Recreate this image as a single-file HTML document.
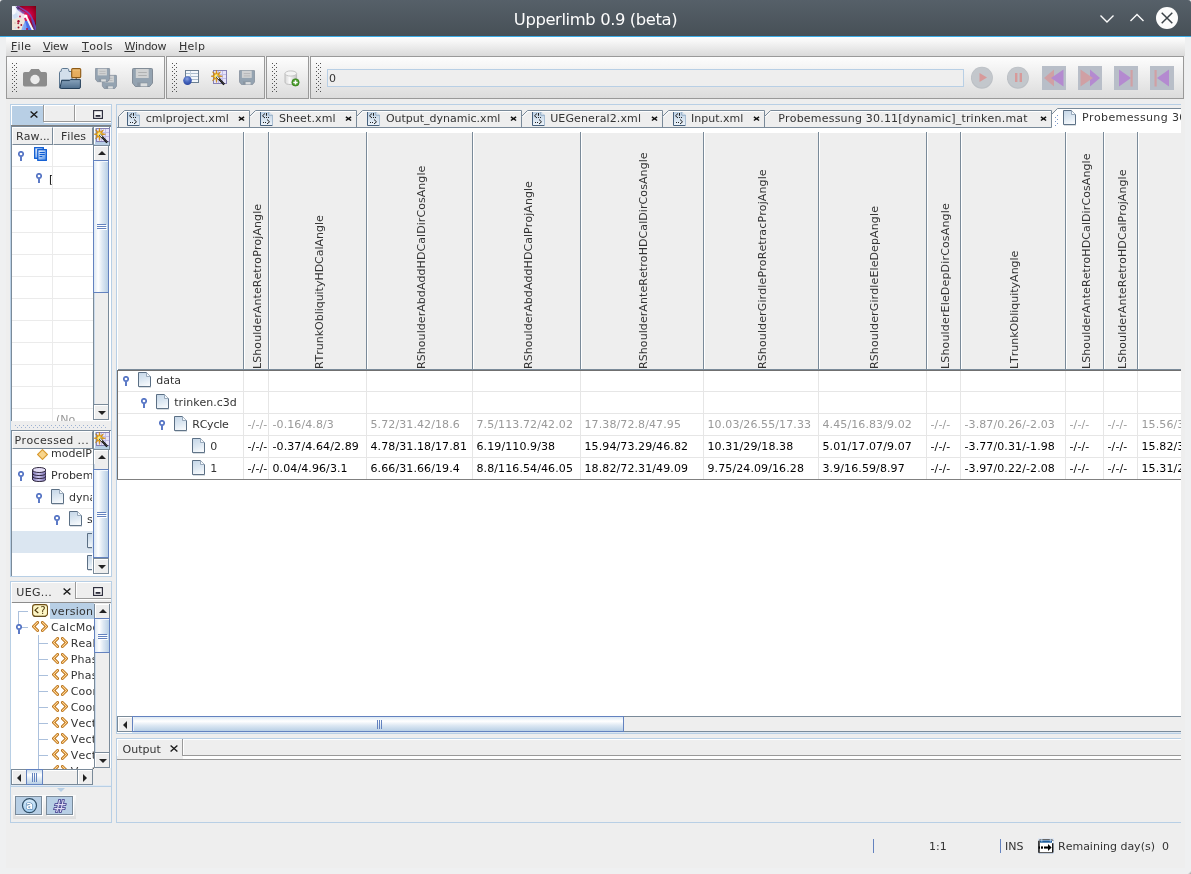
<!DOCTYPE html>
<html><head><meta charset="utf-8"><title>Upperlimb 0.9 (beta)</title>
<style>
html,body{margin:0;padding:0}
body{width:1191px;height:874px;overflow:hidden;background:#eff0f1;position:relative;font-family:"DejaVu Sans","Liberation Sans",sans-serif;font-size:11px;color:#333;font-kerning:none;font-variant-ligatures:none}
.a{position:absolute;box-sizing:border-box}
.t{white-space:nowrap}
u{text-decoration:underline;text-underline-offset:1px}
.clip{overflow:hidden}
</style></head>
<body>
<div id="root" class="a" style="left:0;top:0;width:1191px;height:874px;will-change:transform;">
<div class="a " style="left:0px;top:0px;width:1191px;height:36px;background:linear-gradient(#566069,#475057);border-radius:3px 3px 0 0;"></div>
<div class="a " style="left:0px;top:36px;width:1191px;height:1px;background:#3daee9;"></div>
<svg class="a" style="left:12px;top:6px;" width="24" height="24" viewBox="0 0 24 24" preserveAspectRatio="none"><defs><radialGradient id="g1" gradientUnits="userSpaceOnUse" cx="14.5" cy="9.5" r="15"><stop offset="0" stop-color="#f01c64"/><stop offset=".35" stop-color="#c6003e"/><stop offset=".75" stop-color="#8c001a"/><stop offset="1" stop-color="#5c0008"/></radialGradient><filter id="g2" x="-20%" y="-20%" width="140%" height="140%"><feGaussianBlur stdDeviation="0.6"/></filter><clipPath id="g3"><rect width="24" height="24"/></clipPath></defs><g clip-path="url(#g3)"><rect width="24" height="24" fill="url(#g1)"/><g filter="url(#g2)"><path d="M-1 -1 H4 L7.5 4 L10.5 7 L13 10.5 L13 15 L13.5 19 L15 25 H-1Z" fill="#e2eaf7"/><path d="M-1 14 L4 12.5 L8 11.5 L12.5 13 L13.5 18 L15 25 H-1Z" fill="#efe6d8"/><path d="M0 1 L3 0 L4.5 5 L2 9 L0 8Z" fill="#f6faff"/><path d="M1 9 L5 7 L6 11 L2 13Z" fill="#cfe0f6"/><path d="M7 5 L12.5 8 L13.2 12.5 L10 13.5 L7.5 10Z" fill="#f4dfe8"/><path d="M4.5 -1 C7.5 2 13 3.5 17 7.5 C20.5 11 22 17 24.5 25" fill="none" stroke="#6e54c4" stroke-width="1.6" opacity=".85"/><path d="M3.5 0 C6 2.5 10 4 13.5 6.8 L11 8 L6 4.5Z" fill="#6f62c6" opacity=".7"/><path d="M3.5 0.5 L8 2 L6 4Z" fill="#3b2668" opacity=".85"/><path d="M19 13 L22 14 L25 25 L22 25Z" fill="#5a48b8" opacity=".75"/><path d="M13 14 L16.5 15 L22 25 H11.5Z" fill="#4c70e8"/><path d="M11 19 L13.5 16 L15.5 25 H9Z" fill="#7eaaf8" opacity=".9"/><path d="M12 12.3 L14.5 11.5 L16.6 15 L13 14.8Z" fill="#d81858"/><path d="M14 10 L21.3 25" stroke="#fff" stroke-width="1.9" opacity=".95"/><circle cx="13.7" cy="10.1" r="1.7" fill="#fff"/><circle cx="8" cy="10.5" r=".9" fill="#c82050"/><circle cx="6.5" cy="15.3" r="1.2" fill="#a81030"/><circle cx="6.2" cy="17.2" r="1" fill="#b02040"/><circle cx="9.3" cy="19" r=".9" fill="#a81030"/><circle cx="6.5" cy="21.5" r="1" fill="#981028"/><circle cx="15" cy="23" r="1" fill="#b01040"/><circle cx="3" cy="17" r=".8" fill="#d4c0b0"/><circle cx="3.5" cy="22" r=".9" fill="#c8dcf4"/></g></g></svg>
<div class="a t" style="left:0;top:9px;width:1191px;text-align:center;color:#fcfcfc;font-size:16.4px;line-height:22px;letter-spacing:-0.4px;">Upperlimb 0.9 (beta)</div>
<svg class="a" style="left:1098px;top:10px;" width="18" height="18" viewBox="0 0 18 18"><path d="M2.5 5.5 L9 12 L15.5 5.5" fill="none" stroke="#fcfcfc" stroke-width="1.4"/></svg>
<svg class="a" style="left:1128px;top:9px;" width="18" height="18" viewBox="0 0 18 18"><path d="M2.5 12 L9 5.5 L15.5 12" fill="none" stroke="#fcfcfc" stroke-width="1.4"/></svg>
<svg class="a" style="left:1156px;top:7px;" width="22" height="22" viewBox="0 0 22 22"><circle cx="11" cy="11" r="11" fill="#fcfcfc"/><path d="M5.7 5.7 L16.3 16.3 M16.3 5.7 L5.7 16.3" stroke="#3b4248" stroke-width="1.5" fill="none"/></svg>
<div class="a " style="left:6px;top:37px;width:1179px;height:831px;background:#eeeeee;"></div>
<div class="a " style="left:6px;top:37px;width:1179px;height:19px;background:linear-gradient(#ffffff,#dadada);"></div>
<div class="a t" style="left:10.9px;top:40px;font-size:11px;line-height:13px;letter-spacing:0.3px;"><u>F</u>ile</div>
<div class="a t" style="left:43px;top:40px;font-size:11px;line-height:13px;letter-spacing:-0.25px;"><u>V</u>iew</div>
<div class="a t" style="left:82px;top:40px;font-size:11px;line-height:13px;letter-spacing:0.4px;"><u>T</u>ools</div>
<div class="a t" style="left:124.4px;top:40px;font-size:11px;line-height:13px;letter-spacing:-0.3px;"><u>W</u>indow</div>
<div class="a t" style="left:178.9px;top:40px;font-size:11px;line-height:13px;letter-spacing:0.3px;"><u>H</u>elp</div>
<div class="a " style="left:6px;top:56px;width:159px;height:43px;background:linear-gradient(#fdfdfd,#dcdcdc);border:1px solid #999;"></div>
<svg class="a" style="left:12px;top:63px;" width="5" height="29" viewBox="0 0 5 29" preserveAspectRatio="none"><defs><pattern id="g4" width="4" height="4" patternUnits="userSpaceOnUse"><rect x="0" y="0" width="1" height="1" fill="#505050"/><rect x="2" y="2" width="1" height="1" fill="#505050"/></pattern></defs><rect width="5" height="29" fill="url(#g4)"/></svg>
<div class="a " style="left:166px;top:56px;width:99px;height:43px;background:linear-gradient(#fdfdfd,#dcdcdc);border:1px solid #999;"></div>
<svg class="a" style="left:172px;top:63px;" width="5" height="29" viewBox="0 0 5 29" preserveAspectRatio="none"><defs><pattern id="g5" width="4" height="4" patternUnits="userSpaceOnUse"><rect x="0" y="0" width="1" height="1" fill="#505050"/><rect x="2" y="2" width="1" height="1" fill="#505050"/></pattern></defs><rect width="5" height="29" fill="url(#g5)"/></svg>
<div class="a " style="left:266px;top:56px;width:43px;height:43px;background:linear-gradient(#fdfdfd,#dcdcdc);border:1px solid #999;"></div>
<svg class="a" style="left:272px;top:63px;" width="5" height="29" viewBox="0 0 5 29" preserveAspectRatio="none"><defs><pattern id="g6" width="4" height="4" patternUnits="userSpaceOnUse"><rect x="0" y="0" width="1" height="1" fill="#505050"/><rect x="2" y="2" width="1" height="1" fill="#505050"/></pattern></defs><rect width="5" height="29" fill="url(#g6)"/></svg>
<div class="a " style="left:310px;top:56px;width:874px;height:43px;background:linear-gradient(#fdfdfd,#dcdcdc);border:1px solid #999;"></div>
<svg class="a" style="left:316px;top:63px;" width="5" height="29" viewBox="0 0 5 29" preserveAspectRatio="none"><defs><pattern id="g7" width="4" height="4" patternUnits="userSpaceOnUse"><rect x="0" y="0" width="1" height="1" fill="#505050"/><rect x="2" y="2" width="1" height="1" fill="#505050"/></pattern></defs><rect width="5" height="29" fill="url(#g7)"/></svg>
<svg class="a" style="left:23px;top:68px;" width="24" height="19" viewBox="0 0 24 19" preserveAspectRatio="none"><path d="M1.8 4 H6 L8.2 0.9 H15.8 L18 4 H22.2 Q24 4 24 5.8 V16.8 Q24 18.6 22.2 18.6 H1.8 Q0 18.6 0 16.8 V5.8 Q0 4 1.8 4Z" fill="#8c8c8c"/><circle cx="12" cy="11.5" r="4.7" fill="#ececec"/></svg>
<svg class="a" style="left:59px;top:68px;" width="23" height="22" viewBox="0 0 23 22" preserveAspectRatio="none"><defs><linearGradient id="g8" x1="0" y1="0" x2="0" y2="1"><stop offset="0" stop-color="#8aa4bd"/><stop offset="1" stop-color="#4f6f8e"/></linearGradient><linearGradient id="g9" x1="0" y1="0" x2="0" y2="1"><stop offset="0" stop-color="#f6cf8e"/><stop offset=".3" stop-color="#e8b060"/><stop offset="1" stop-color="#e3a85a"/></linearGradient></defs><path d="M0.5 20 V4.5 Q0.5 3.5 1.5 3.5 H2 L2.5 1.2 Q2.7 0.5 3.5 0.5 H8.5 Q9.3 0.5 9.5 1.2 L10 3.5 H13 V12 H2.5 V20Z" fill="#d3dfeb" stroke="#5d7790" stroke-width="1"/><rect x="12.7" y="0.6" width="9" height="9" rx="1" fill="url(#g9)" stroke="#8e5a14" stroke-width="1.1"/><path d="M17.2 9.8 V12" stroke="#5a4a30" stroke-width="1"/><path d="M2.6 12.6 H10.6 L11.6 11.6 H21.4 V19 Q21.4 20.5 20 20.5 H2.2 Q1 20.5 1.2 19 Z" fill="url(#g8)" stroke="#243f5a" stroke-width="1"/></svg>
<svg class="a" style="left:95px;top:68px;" width="22" height="21" viewBox="0 0 22 21" preserveAspectRatio="none"><g transform="translate(7,7) scale(0.68,0.74)"><path d="M0.5 1.5 Q0.5 0.5 1.5 0.5 H20.5 Q21.5 0.5 21.5 1.5 V15 L18.5 18.5 H3.5 L0.5 15Z" fill="#94a3b1" stroke="#808a96" stroke-width="1"/><rect x="4" y="1" width="13.5" height="9" fill="#d0d2d3"/><path d="M6.5 4.5 H15.5 M6.5 7.5 H15.5" stroke="#aeb0b1" stroke-width="1"/><rect x="5.5" y="14.5" width="11" height="4" fill="#8a96a2"/><rect x="9" y="15.3" width="7" height="3" fill="#dcdedf"/></g><g transform="scale(0.68,0.74)"><path d="M0.5 1.5 Q0.5 0.5 1.5 0.5 H20.5 Q21.5 0.5 21.5 1.5 V15 L18.5 18.5 H3.5 L0.5 15Z" fill="#94a3b1" stroke="#808a96" stroke-width="1"/><rect x="4" y="1" width="13.5" height="9" fill="#d0d2d3"/><path d="M6.5 4.5 H15.5 M6.5 7.5 H15.5" stroke="#aeb0b1" stroke-width="1"/><rect x="5.5" y="14.5" width="11" height="4" fill="#8a96a2"/><rect x="9" y="15.3" width="7" height="3" fill="#dcdedf"/></g></svg>
<svg class="a" style="left:132px;top:68px;" width="21" height="19" viewBox="0 0 22 19" preserveAspectRatio="none"><path d="M0.5 1.5 Q0.5 0.5 1.5 0.5 H20.5 Q21.5 0.5 21.5 1.5 V15 L18.5 18.5 H3.5 L0.5 15Z" fill="#94a3b1" stroke="#808a96" stroke-width="1"/><rect x="4" y="1" width="13.5" height="9" fill="#d0d2d3"/><path d="M6.5 4.5 H15.5 M6.5 7.5 H15.5" stroke="#aeb0b1" stroke-width="1"/><rect x="5.5" y="14.5" width="11" height="4" fill="#8a96a2"/><rect x="9" y="15.3" width="7" height="3" fill="#dcdedf"/></svg>
<svg class="a" style="left:183px;top:70px;" width="16" height="16" viewBox="0 0 16 16" preserveAspectRatio="none"><defs><radialGradient id="g10" cx=".45" cy=".3" r=".7"><stop offset="0" stop-color="#8aa2e0"/><stop offset=".5" stop-color="#4868c0"/><stop offset="1" stop-color="#2a46a0"/></radialGradient></defs><rect x="2.5" y="0.5" width="13" height="12" fill="#f2f7fb" stroke="#6b7f92" stroke-width="1"/><path d="M3 3.5 H15 M3 6.5 H15 M3 9.5 H15" stroke="#a9bccd" stroke-width="1"/><path d="M7.5 1 V12" stroke="#c4d2df" stroke-width="1"/><circle cx="4.5" cy="10.6" r="4.3" fill="url(#g10)"/></svg>
<svg class="a" style="left:211px;top:70px;" width="16" height="16" viewBox="0 0 16 16" preserveAspectRatio="none"><rect x="2.5" y="0.5" width="13" height="13" fill="#e6e3fa" stroke="#8581b4" stroke-width="1"/><path d="M3 4.5 H15 M3 8.5 H15 M11.5 1 V13 M7.5 1 V13" stroke="#c2bee6" stroke-width="1"/><path d="M5.5 0 L6.3 4 L9.5 1.8 L7.6 5.2 L11.5 6.2 L7.6 7.2 L9.5 10.8 L6.3 8.4 L5.5 12.5 L4.7 8.4 L1.5 10.8 L3.4 7.2 L0 6.2 L3.4 5.2 L1.5 1.8 L4.7 4Z" fill="#e8a010" stroke="#c07c08" stroke-width=".5"/><circle cx="5.5" cy="6.2" r="2" fill="#fff27a"/><path d="M5.5 6.2 L13.2 14.4" stroke="#111" stroke-width="2.2"/><path d="M5.5 6.2 L8 8.8" stroke="#fff" stroke-width="1.2"/><path d="M8.6 9.5 L13 14.2" stroke="#888" stroke-width=".8" stroke-dasharray=".8 .8"/></svg>
<svg class="a" style="left:239px;top:70px;" width="16" height="15" viewBox="0 0 22 19" preserveAspectRatio="none"><path d="M0.5 1.5 Q0.5 0.5 1.5 0.5 H20.5 Q21.5 0.5 21.5 1.5 V15 L18.5 18.5 H3.5 L0.5 15Z" fill="#94a3b1" stroke="#808a96" stroke-width="1"/><rect x="4" y="1" width="13.5" height="9" fill="#d0d2d3"/><path d="M6.5 4.5 H15.5 M6.5 7.5 H15.5" stroke="#aeb0b1" stroke-width="1"/><rect x="5.5" y="14.5" width="11" height="4" fill="#8a96a2"/><rect x="9" y="15.3" width="7" height="3" fill="#dcdedf"/></svg>
<svg class="a" style="left:284px;top:70px;" width="16" height="17" viewBox="0 0 16 17" preserveAspectRatio="none"><defs><linearGradient id="g11" x1="0" y1="0" x2="1" y2="0"><stop offset="0" stop-color="#d8d8d8"/><stop offset=".4" stop-color="#fafafa"/><stop offset="1" stop-color="#c4c4c4"/></linearGradient></defs><path d="M1 3.5 V12 Q1 14.5 6.8 14.5 Q12.6 14.5 12.6 12 V3.5Z" fill="url(#g11)" stroke="#bdbdbd" stroke-width="1"/><ellipse cx="6.8" cy="3.5" rx="5.8" ry="2.6" fill="#f4f4f4" stroke="#c4c4c4" stroke-width="1"/><circle cx="11.5" cy="12.4" r="3.7" fill="#4a9a2a" stroke="#2e7a16" stroke-width=".6"/><path d="M11.5 10.2 V14.6 M9.3 12.4 H13.7" stroke="#fff" stroke-width="1.5"/></svg>
<div class="a " style="left:327px;top:69px;width:637px;height:18px;background:#eeeeee;border:1px solid #b8cfe5;"></div>
<div class="a t" style="left:329px;top:72px;font-size:11px;line-height:13px;">0</div>
<svg class="a" style="left:971px;top:66px;" width="24" height="24" viewBox="0 0 24 24" preserveAspectRatio="none"><circle cx="10.9" cy="11.8" r="11" fill="#bcc0c5"/><circle cx="10.9" cy="11.4" r="10.2" fill="#c3c7cc"/><path d="M8.5 7 L16 11.5 L8.5 16Z" fill="#d79a9a"/></svg>
<svg class="a" style="left:1007px;top:66px;" width="24" height="24" viewBox="0 0 24 24" preserveAspectRatio="none"><circle cx="10.9" cy="11.8" r="11" fill="#bcc0c5"/><circle cx="10.9" cy="11.4" r="10.2" fill="#c3c7cc"/><rect x="8" y="7" width="2.4" height="9" fill="#d79a9a"/><rect x="12.6" y="7" width="2.4" height="9" fill="#d79a9a"/></svg>
<svg class="a" style="left:1042px;top:66px;" width="24" height="24" viewBox="0 0 24 24" preserveAspectRatio="none"><rect width="24" height="24" fill="#b8bec8"/><path d="M12 3.5 V20.5 L2 12Z" fill="#d0a0a4"/><path d="M21.5 3.5 V20.5 L9 12Z" fill="#b48ad0"/></svg>
<svg class="a" style="left:1078px;top:66px;" width="24" height="24" viewBox="0 0 24 24" preserveAspectRatio="none"><rect width="24" height="24" fill="#b8bec8"/><path d="M12 3.5 V20.5 L22 12Z" fill="#b48ad0"/><path d="M2.5 3.5 V20.5 L15 12Z" fill="#d0a0a4"/></svg>
<svg class="a" style="left:1114px;top:66px;" width="24" height="24" viewBox="0 0 24 24" preserveAspectRatio="none"><rect width="24" height="24" fill="#b8bec8"/><path d="M5 3.5 V20.5 L17 12Z" fill="#b48ad0"/><rect x="16.5" y="4" width="2.2" height="16.5" fill="#d0a0a4"/></svg>
<svg class="a" style="left:1150px;top:66px;" width="24" height="24" viewBox="0 0 24 24" preserveAspectRatio="none"><rect width="24" height="24" fill="#b8bec8"/><path d="M19 3.5 V20.5 L7 12Z" fill="#b48ad0"/><rect x="4.5" y="4" width="2.2" height="16.5" fill="#d0a0a4"/></svg>
<div class="a " style="left:10px;top:104px;width:102px;height:473px;border:1px solid #b8cfe5;"></div>
<div class="a " style="left:11px;top:105px;width:100px;height:21px;background:#b8cfe5;"></div>
<div class="a " style="left:11px;top:105px;width:100px;height:1px;background:#fff;"></div>
<div class="a " style="left:11px;top:105px;width:1px;height:20px;background:#fff;"></div>
<div class="a " style="left:43px;top:106px;width:68px;height:16px;background:#eeeeee;"></div>
<div class="a " style="left:43px;top:105px;width:68px;height:1px;background:#fff;"></div>
<div class="a " style="left:43px;top:105px;width:1px;height:17px;background:#999;"></div>
<div class="a " style="left:74px;top:105px;width:1px;height:17px;background:#999;"></div>
<div class="a " style="left:43px;top:121px;width:68px;height:1px;background:#999;"></div>
<div class="a " style="left:44px;top:122px;width:67px;height:1px;background:#fff;"></div>
<div class="a " style="left:44px;top:106px;width:1px;height:15px;background:#fff;"></div>
<div class="a " style="left:75px;top:106px;width:1px;height:15px;background:#fff;"></div>
<svg class="a" style="left:30px;top:111px;" width="8" height="7" viewBox="0 0 8 7" preserveAspectRatio="none"><path d="M0.6 0.5 L7.4 6.5 M7.4 0.5 L0.6 6.5" stroke="#1a1a1a" stroke-width="1.35" fill="none"/></svg>
<svg class="a" style="left:93px;top:110px;" width="10" height="9" viewBox="0 0 10 9" preserveAspectRatio="none"><rect x="0.6" y="0.6" width="8.8" height="7.8" fill="#f6f6f6" stroke="#2b2b3a" stroke-width="1.15"/><rect x="2.6" y="5" width="4.8" height="1.8" fill="#2b2b3a"/></svg>
<div class="a " style="left:11px;top:125px;width:100px;height:1px;background:#808080;"></div>
<div class="a clip" style="left:11px;top:126px;width:100px;height:295px;background:#fff;border-left:1px solid #7a8a99;border-top:1px solid #7a8a99;"></div>
<div class="a " style="left:12px;top:127px;width:41px;height:18px;background:#eeeeee;border-right:1px solid #7a8a99;border-bottom:1px solid #7a8a99;border-top:1px solid #fff;border-left:1px solid #fff;"></div>
<div class="a " style="left:53px;top:127px;width:40px;height:18px;background:#eeeeee;border-right:1px solid #7a8a99;border-bottom:1px solid #7a8a99;border-top:1px solid #fff;border-left:1px solid #fff;"></div>
<div class="a t" style="left:16px;top:130px;font-size:11px;line-height:13px;">Raw...</div>
<div class="a t" style="left:61px;top:130px;font-size:11px;line-height:13px;">Files</div>
<div class="a " style="left:93px;top:126px;width:17px;height:20px;background:#b8cfe5;border:1px solid #7a8a99;"></div>
<div class="a " style="left:94px;top:127px;width:15px;height:1px;background:#fff;"></div>
<div class="a " style="left:94px;top:127px;width:1px;height:17px;background:#fff;"></div>
<svg class="a" style="left:94px;top:128px;" width="16" height="16" viewBox="0 0 16 16" preserveAspectRatio="none"><rect x="2.5" y="0.5" width="13" height="13" fill="#e6e3fa" stroke="#8581b4" stroke-width="1"/><path d="M3 4.5 H15 M3 8.5 H15 M11.5 1 V13 M7.5 1 V13" stroke="#c2bee6" stroke-width="1"/><path d="M5.5 0 L6.3 4 L9.5 1.8 L7.6 5.2 L11.5 6.2 L7.6 7.2 L9.5 10.8 L6.3 8.4 L5.5 12.5 L4.7 8.4 L1.5 10.8 L3.4 7.2 L0 6.2 L3.4 5.2 L1.5 1.8 L4.7 4Z" fill="#e8a010" stroke="#c07c08" stroke-width=".5"/><circle cx="5.5" cy="6.2" r="2" fill="#fff27a"/><path d="M5.5 6.2 L13.2 14.4" stroke="#111" stroke-width="2.2"/><path d="M5.5 6.2 L8 8.8" stroke="#fff" stroke-width="1.2"/><path d="M8.6 9.5 L13 14.2" stroke="#888" stroke-width=".8" stroke-dasharray=".8 .8"/></svg>
<div class="a " style="left:12px;top:166px;width:81px;height:1px;background:#ebebeb;"></div>
<div class="a " style="left:12px;top:188px;width:81px;height:1px;background:#ebebeb;"></div>
<div class="a " style="left:12px;top:210px;width:81px;height:1px;background:#ebebeb;"></div>
<div class="a " style="left:12px;top:232px;width:81px;height:1px;background:#ebebeb;"></div>
<div class="a " style="left:12px;top:254px;width:81px;height:1px;background:#ebebeb;"></div>
<div class="a " style="left:12px;top:276px;width:81px;height:1px;background:#ebebeb;"></div>
<div class="a " style="left:12px;top:298px;width:81px;height:1px;background:#ebebeb;"></div>
<div class="a " style="left:12px;top:320px;width:81px;height:1px;background:#ebebeb;"></div>
<div class="a " style="left:12px;top:342px;width:81px;height:1px;background:#ebebeb;"></div>
<div class="a " style="left:12px;top:364px;width:81px;height:1px;background:#ebebeb;"></div>
<div class="a " style="left:12px;top:386px;width:81px;height:1px;background:#ebebeb;"></div>
<div class="a " style="left:12px;top:408px;width:81px;height:1px;background:#ebebeb;"></div>
<div class="a " style="left:52px;top:145px;width:1px;height:276px;background:#ebebeb;"></div>
<svg class="a" style="left:18px;top:151px;" width="6" height="10" viewBox="0 0 6 10" preserveAspectRatio="none"><circle cx="3" cy="3" r="2.2" fill="#fff" stroke="#5574c4" stroke-width="1.7"/><path d="M3 5.4 V10" stroke="#5574c4" stroke-width="1.9"/></svg>
<svg class="a" style="left:34px;top:147px;" width="13" height="14" viewBox="0 0 13 14" preserveAspectRatio="none"><defs><linearGradient id="g12" x1="0" y1="0" x2="1" y2="1"><stop offset="0" stop-color="#ffffff"/><stop offset=".45" stop-color="#a8c8f4"/><stop offset="1" stop-color="#4a8ce4"/></linearGradient></defs><rect x="0.7" y="0.7" width="8.6" height="10.6" fill="url(#g12)" stroke="#0c5ad2" stroke-width="1.3"/><rect x="3.8" y="2.7" width="8.5" height="10.6" fill="url(#g12)" stroke="#0c5ad2" stroke-width="1.3"/><path d="M5.5 5.5 H10.8 M5.5 7.5 H10.8 M5.5 9.5 H8.3" stroke="#0c5ad2" stroke-width="1"/></svg>
<svg class="a" style="left:36px;top:173px;" width="6" height="10" viewBox="0 0 6 10" preserveAspectRatio="none"><circle cx="3" cy="3" r="2.2" fill="#fff" stroke="#5574c4" stroke-width="1.7"/><path d="M3 5.4 V10" stroke="#5574c4" stroke-width="1.9"/></svg>
<div class="a clip" style="left:12px;top:167px;width:40px;height:21px;"><div class="a t" style="left:37px;top:6px;font-size:11px;line-height:13px;color:#111;">[dynamic]</div></div>
<div class="a clip" style="left:53px;top:409px;width:40px;height:12px;"><div class="a t" style="left:3px;top:4px;font-size:11px;line-height:13px;color:#999;">(No</div></div>
<div class="a " style="left:93px;top:146px;width:16px;height:274px;background:#eeeeee;border-left:1px solid #7a8a99;border-right:1px solid #7a8a99;"></div>
<div class="a " style="left:94px;top:146px;width:1px;height:274px;background:#cbdaea;"></div>
<div class="a " style="left:109px;top:146px;width:1px;height:274px;background:#fff;"></div>
<div class="a " style="left:94px;top:146px;width:14px;height:14px;background:#eeeeee;border-left:1px solid #fff;border-top:1px solid #fff;"></div>
<svg class="a" style="left:98px;top:151px;" width="8" height="4" viewBox="0 0 8 4" preserveAspectRatio="none"><path d="M0 4 L4 0 L8 4Z" fill="#222"/></svg>
<div class="a " style="left:94px;top:404px;width:14px;height:16px;background:#eeeeee;border-top:1px solid #7a8a99;border-bottom:1px solid #7a8a99;"></div>
<div class="a " style="left:94px;top:405px;width:14px;height:1px;background:#fff;"></div>
<div class="a " style="left:94px;top:405px;width:1px;height:14px;background:#fff;"></div>
<svg class="a" style="left:98px;top:411px;" width="8" height="4" viewBox="0 0 8 4" preserveAspectRatio="none"><path d="M0 0 L4 4 L8 0Z" fill="#222"/></svg>
<div class="a " style="left:93px;top:160px;width:16px;height:133px;background:linear-gradient(90deg,#dde8f3,#ffffff 30%,#dde8f3 60%,#b8cfe5);border:1px solid #6382bf;"></div>
<div class="a " style="left:94px;top:161px;width:14px;height:1px;background:#f4f8fc;"></div>
<div class="a " style="left:97px;top:224px;width:9px;height:1px;background:#6382bf;"></div>
<div class="a " style="left:98px;top:225px;width:9px;height:1px;background:#fff;"></div>
<div class="a " style="left:97px;top:226px;width:9px;height:1px;background:#6382bf;"></div>
<div class="a " style="left:98px;top:227px;width:9px;height:1px;background:#fff;"></div>
<div class="a " style="left:97px;top:228px;width:9px;height:1px;background:#6382bf;"></div>
<div class="a " style="left:98px;top:229px;width:9px;height:1px;background:#fff;"></div>
<div class="a " style="left:11px;top:421px;width:100px;height:10px;background:#eeeeee;"></div>
<svg class="a" style="left:15px;top:425px" width="92" height="3"><defs><pattern id="spl" width="4" height="4" patternUnits="userSpaceOnUse"><rect x="0" y="0" width="1" height="1" fill="#9db1d2"/><rect x="2" y="2" width="1" height="1" fill="#9db1d2"/></pattern></defs><rect width="91" height="3" fill="url(#spl)"/></svg>
<div class="a clip" style="left:11px;top:430px;width:100px;height:146px;background:#fff;border-left:1px solid #7a8a99;border-top:1px solid #7a8a99;"></div>
<div class="a " style="left:12px;top:531px;width:81px;height:22px;background:#dbe6f1;"></div>
<div class="a " style="left:12px;top:464px;width:81px;height:1px;background:#ebebeb;"></div>
<div class="a " style="left:12px;top:486px;width:81px;height:1px;background:#ebebeb;"></div>
<div class="a " style="left:12px;top:508px;width:81px;height:1px;background:#ebebeb;"></div>
<svg class="a" style="left:37px;top:449px;" width="11" height="11" viewBox="0 0 11 11" preserveAspectRatio="none"><path d="M5.5 0.6 L10.4 5.5 L5.5 10.4 L0.6 5.5Z" fill="#f8d58c" stroke="#d89a30" stroke-width="1.1"/></svg>
<div class="a clip" style="left:12px;top:446px;width:80px;height:18px;"><div class="a t" style="left:39px;top:1px;font-size:11px;line-height:13px;">modelPar</div></div>
<svg class="a" style="left:18px;top:471px;" width="6" height="10" viewBox="0 0 6 10" preserveAspectRatio="none"><circle cx="3" cy="3" r="2.2" fill="#fff" stroke="#5574c4" stroke-width="1.7"/><path d="M3 5.4 V10" stroke="#5574c4" stroke-width="1.9"/></svg>
<svg class="a" style="left:31.5px;top:467px;" width="14.4" height="15" viewBox="0 0 15 15" preserveAspectRatio="none"><defs><linearGradient id="g13" x1="0" y1="0" x2="1" y2="0"><stop offset="0" stop-color="#8076b8"/><stop offset=".45" stop-color="#cdc6ee"/><stop offset="1" stop-color="#7a70b4"/></linearGradient></defs><path d="M0.5 3 V12 Q0.5 14.5 7.5 14.5 Q14.5 14.5 14.5 12 V3Z" fill="url(#g13)" stroke="#2a2238" stroke-width="1"/><ellipse cx="7.5" cy="3" rx="7" ry="2.5" fill="#e4def6" stroke="#2a2238" stroke-width="1"/><path d="M0.5 6 Q0.5 8.5 7.5 8.5 Q14.5 8.5 14.5 6 M0.5 9 Q0.5 11.5 7.5 11.5 Q14.5 11.5 14.5 9" fill="none" stroke="#2a2238" stroke-width="1"/></svg>
<div class="a clip" style="left:12px;top:465px;width:80px;height:21px;"><div class="a t" style="left:39px;top:4px;font-size:11px;line-height:13px;">Probemessung</div></div>
<svg class="a" style="left:36px;top:493px;" width="6" height="10" viewBox="0 0 6 10" preserveAspectRatio="none"><circle cx="3" cy="3" r="2.2" fill="#fff" stroke="#5574c4" stroke-width="1.7"/><path d="M3 5.4 V10" stroke="#5574c4" stroke-width="1.9"/></svg>
<svg class="a" style="left:51px;top:489px;" width="13" height="16" viewBox="0 0 13 16" preserveAspectRatio="none"><defs><linearGradient id="g14" x1="0.2" y1="0" x2="0.5" y2="1"><stop offset="0" stop-color="#c6d7e8"/><stop offset=".55" stop-color="#dde8f2"/><stop offset="1" stop-color="#f6f9fc"/></linearGradient></defs><path d="M0.5 0.5 H8.5 L12.5 4.5 V14.5 H0.5Z" fill="url(#g14)" stroke="#5b6f84" stroke-width="1"/><path d="M8.5 0.5 V4.5 H12.5" fill="#f4f8fc" stroke="#8ea2b6" stroke-width=".9"/><path d="M1 15.3 H13" stroke="#9aa6b2" stroke-width=".8" opacity=".6"/></svg>
<div class="a clip" style="left:12px;top:487px;width:80px;height:21px;"><div class="a t" style="left:57px;top:4px;font-size:11px;line-height:13px;">dynamic</div></div>
<svg class="a" style="left:54px;top:515px;" width="6" height="10" viewBox="0 0 6 10" preserveAspectRatio="none"><circle cx="3" cy="3" r="2.2" fill="#fff" stroke="#5574c4" stroke-width="1.7"/><path d="M3 5.4 V10" stroke="#5574c4" stroke-width="1.9"/></svg>
<svg class="a" style="left:69px;top:511px;" width="13" height="16" viewBox="0 0 13 16" preserveAspectRatio="none"><defs><linearGradient id="g15" x1="0.2" y1="0" x2="0.5" y2="1"><stop offset="0" stop-color="#c6d7e8"/><stop offset=".55" stop-color="#dde8f2"/><stop offset="1" stop-color="#f6f9fc"/></linearGradient></defs><path d="M0.5 0.5 H8.5 L12.5 4.5 V14.5 H0.5Z" fill="url(#g15)" stroke="#5b6f84" stroke-width="1"/><path d="M8.5 0.5 V4.5 H12.5" fill="#f4f8fc" stroke="#8ea2b6" stroke-width=".9"/><path d="M1 15.3 H13" stroke="#9aa6b2" stroke-width=".8" opacity=".6"/></svg>
<div class="a clip" style="left:12px;top:509px;width:80px;height:21px;"><div class="a t" style="left:75px;top:4px;font-size:11px;line-height:13px;">static</div></div>
<svg class="a" style="left:87px;top:533px;" width="5" height="16" viewBox="0 0 5 16" preserveAspectRatio="none"><defs><linearGradient id="g16" x1="0.2" y1="0" x2="0.5" y2="1"><stop offset="0" stop-color="#c6d7e8"/><stop offset=".55" stop-color="#dde8f2"/><stop offset="1" stop-color="#f6f9fc"/></linearGradient></defs><path d="M0.5 0.5 H8.5 L12.5 4.5 V14.5 H0.5Z" fill="url(#g16)" stroke="#5b6f84" stroke-width="1"/><path d="M8.5 0.5 V4.5 H12.5" fill="#f4f8fc" stroke="#8ea2b6" stroke-width=".9"/><path d="M1 15.3 H13" stroke="#9aa6b2" stroke-width=".8" opacity=".6"/></svg>
<svg class="a" style="left:87px;top:555px;" width="5" height="16" viewBox="0 0 5 16" preserveAspectRatio="none"><defs><linearGradient id="g17" x1="0.2" y1="0" x2="0.5" y2="1"><stop offset="0" stop-color="#c6d7e8"/><stop offset=".55" stop-color="#dde8f2"/><stop offset="1" stop-color="#f6f9fc"/></linearGradient></defs><path d="M0.5 0.5 H8.5 L12.5 4.5 V14.5 H0.5Z" fill="url(#g17)" stroke="#5b6f84" stroke-width="1"/><path d="M8.5 0.5 V4.5 H12.5" fill="#f4f8fc" stroke="#8ea2b6" stroke-width=".9"/><path d="M1 15.3 H13" stroke="#9aa6b2" stroke-width=".8" opacity=".6"/></svg>
<div class="a " style="left:12px;top:431px;width:81px;height:18px;background:#eeeeee;border-right:1px solid #7a8a99;border-bottom:1px solid #7a8a99;border-top:1px solid #fff;border-left:1px solid #fff;"></div>
<div class="a t" style="left:14.6px;top:434px;font-size:11px;line-height:13px;letter-spacing:0.35px;">Processed ...</div>
<div class="a " style="left:93px;top:430px;width:17px;height:20px;background:#b8cfe5;border:1px solid #7a8a99;"></div>
<div class="a " style="left:94px;top:431px;width:15px;height:1px;background:#fff;"></div>
<div class="a " style="left:94px;top:431px;width:1px;height:17px;background:#fff;"></div>
<svg class="a" style="left:94px;top:432px;" width="16" height="16" viewBox="0 0 16 16" preserveAspectRatio="none"><rect x="2.5" y="0.5" width="13" height="13" fill="#e6e3fa" stroke="#8581b4" stroke-width="1"/><path d="M3 4.5 H15 M3 8.5 H15 M11.5 1 V13 M7.5 1 V13" stroke="#c2bee6" stroke-width="1"/><path d="M5.5 0 L6.3 4 L9.5 1.8 L7.6 5.2 L11.5 6.2 L7.6 7.2 L9.5 10.8 L6.3 8.4 L5.5 12.5 L4.7 8.4 L1.5 10.8 L3.4 7.2 L0 6.2 L3.4 5.2 L1.5 1.8 L4.7 4Z" fill="#e8a010" stroke="#c07c08" stroke-width=".5"/><circle cx="5.5" cy="6.2" r="2" fill="#fff27a"/><path d="M5.5 6.2 L13.2 14.4" stroke="#111" stroke-width="2.2"/><path d="M5.5 6.2 L8 8.8" stroke="#fff" stroke-width="1.2"/><path d="M8.6 9.5 L13 14.2" stroke="#888" stroke-width=".8" stroke-dasharray=".8 .8"/></svg>
<div class="a " style="left:93px;top:450px;width:16px;height:124px;background:#eeeeee;border-left:1px solid #7a8a99;border-right:1px solid #7a8a99;"></div>
<div class="a " style="left:94px;top:450px;width:1px;height:124px;background:#cbdaea;"></div>
<div class="a " style="left:109px;top:450px;width:1px;height:124px;background:#fff;"></div>
<div class="a " style="left:94px;top:450px;width:14px;height:14px;background:#eeeeee;border-left:1px solid #fff;border-top:1px solid #fff;"></div>
<svg class="a" style="left:98px;top:455px;" width="8" height="4" viewBox="0 0 8 4" preserveAspectRatio="none"><path d="M0 4 L4 0 L8 4Z" fill="#222"/></svg>
<div class="a " style="left:94px;top:558px;width:14px;height:16px;background:#eeeeee;border-top:1px solid #7a8a99;border-bottom:1px solid #7a8a99;"></div>
<div class="a " style="left:94px;top:559px;width:14px;height:1px;background:#fff;"></div>
<div class="a " style="left:94px;top:559px;width:1px;height:14px;background:#fff;"></div>
<svg class="a" style="left:98px;top:565px;" width="8" height="4" viewBox="0 0 8 4" preserveAspectRatio="none"><path d="M0 0 L4 4 L8 0Z" fill="#222"/></svg>
<div class="a " style="left:93px;top:469px;width:16px;height:89px;background:linear-gradient(90deg,#dde8f3,#ffffff 30%,#dde8f3 60%,#b8cfe5);border:1px solid #6382bf;"></div>
<div class="a " style="left:94px;top:470px;width:14px;height:1px;background:#f4f8fc;"></div>
<div class="a " style="left:97px;top:512px;width:9px;height:1px;background:#6382bf;"></div>
<div class="a " style="left:98px;top:513px;width:9px;height:1px;background:#fff;"></div>
<div class="a " style="left:97px;top:514px;width:9px;height:1px;background:#6382bf;"></div>
<div class="a " style="left:98px;top:515px;width:9px;height:1px;background:#fff;"></div>
<div class="a " style="left:97px;top:516px;width:9px;height:1px;background:#6382bf;"></div>
<div class="a " style="left:98px;top:517px;width:9px;height:1px;background:#fff;"></div>
<div class="a " style="left:10px;top:581px;width:102px;height:242px;border:1px solid #b8cfe5;"></div>
<div class="a " style="left:11px;top:582px;width:100px;height:1px;background:#fff;"></div>
<div class="a " style="left:11px;top:582px;width:1px;height:20px;background:#fff;"></div>
<div class="a " style="left:75px;top:582px;width:1px;height:16px;background:#999;"></div>
<div class="a " style="left:75px;top:598px;width:36px;height:1px;background:#999;"></div>
<div class="a " style="left:76px;top:599px;width:35px;height:1px;background:#fff;"></div>
<div class="a " style="left:76px;top:583px;width:1px;height:15px;background:#fff;"></div>
<div class="a t" style="left:16.3px;top:586px;font-size:11px;line-height:13px;letter-spacing:0.3px;">UEG...</div>
<svg class="a" style="left:63px;top:588px;" width="8" height="7" viewBox="0 0 8 7" preserveAspectRatio="none"><path d="M0.6 0.5 L7.4 6.5 M7.4 0.5 L0.6 6.5" stroke="#1a1a1a" stroke-width="1.35" fill="none"/></svg>
<svg class="a" style="left:93px;top:587px;" width="10" height="9" viewBox="0 0 10 9" preserveAspectRatio="none"><rect x="0.6" y="0.6" width="8.8" height="7.8" fill="#f6f6f6" stroke="#2b2b3a" stroke-width="1.15"/><rect x="2.6" y="5" width="4.8" height="1.8" fill="#2b2b3a"/></svg>
<div class="a " style="left:12px;top:602px;width:99px;height:1px;background:#8c8c8c;"></div>
<div class="a clip" style="left:11px;top:603px;width:83px;height:166px;background:#fff;"></div>
<div class="a " style="left:50px;top:603px;width:44px;height:16px;background:#b8cfe5;"></div>
<div class="a " style="left:18px;top:611px;width:1px;height:13px;background:#abc0dc;"></div>
<div class="a " style="left:18px;top:611px;width:10px;height:1px;background:#abc0dc;"></div>
<div class="a " style="left:22px;top:627px;width:6px;height:1px;background:#abc0dc;"></div>
<div class="a " style="left:38px;top:635px;width:1px;height:134px;background:#abc0dc;"></div>
<div class="a " style="left:38px;top:643px;width:10px;height:1px;background:#abc0dc;"></div>
<div class="a " style="left:38px;top:659px;width:10px;height:1px;background:#abc0dc;"></div>
<div class="a " style="left:38px;top:675px;width:10px;height:1px;background:#abc0dc;"></div>
<div class="a " style="left:38px;top:691px;width:10px;height:1px;background:#abc0dc;"></div>
<div class="a " style="left:38px;top:707px;width:10px;height:1px;background:#abc0dc;"></div>
<div class="a " style="left:38px;top:723px;width:10px;height:1px;background:#abc0dc;"></div>
<div class="a " style="left:38px;top:739px;width:10px;height:1px;background:#abc0dc;"></div>
<div class="a " style="left:38px;top:755px;width:10px;height:1px;background:#abc0dc;"></div>
<div class="a " style="left:38px;top:771px;width:10px;height:1px;background:#abc0dc;"></div>
<svg class="a" style="left:16px;top:624px;" width="6" height="10" viewBox="0 0 6 10" preserveAspectRatio="none"><circle cx="3" cy="3" r="2.2" fill="#fff" stroke="#5574c4" stroke-width="1.7"/><path d="M3 5.4 V10" stroke="#5574c4" stroke-width="1.9"/></svg>
<svg class="a" style="left:32px;top:604px;" width="16" height="13" viewBox="0 0 16 13" preserveAspectRatio="none"><rect x="0.6" y="0.6" width="14.9" height="11.6" rx="2.6" fill="#fdf6c6" stroke="#6e4e14" stroke-width="1.1"/><path d="M1.5 12.4 H14" stroke="#4a3408" stroke-width=".9" opacity=".8"/><path d="M6.3 3.4 L3 6.2 L6.3 9" fill="none" stroke="#4a3408" stroke-width="1.1"/></svg>
<div class="a t" style="left:40.2px;top:604.8px;font-size:10px;line-height:12px;color:#4a3408;">?</div>
<svg class="a" style="left:32px;top:621px;" width="16" height="11" viewBox="0 0 16 11" preserveAspectRatio="none"><path d="M5.6 1.4 L1.5 5.5 L5.6 9.6" fill="none" stroke="#a05c08" stroke-width="2.8" stroke-linecap="round" stroke-linejoin="round"/><path d="M10.4 1.4 L14.5 5.5 L10.4 9.6" fill="none" stroke="#a05c08" stroke-width="2.8" stroke-linecap="round" stroke-linejoin="round"/><path d="M5.6 1.4 L1.5 5.5 L5.6 9.6" fill="none" stroke="#f6ae4c" stroke-width="1.5" stroke-linecap="round" stroke-linejoin="round"/><path d="M10.4 1.4 L14.5 5.5 L10.4 9.6" fill="none" stroke="#f6ae4c" stroke-width="1.5" stroke-linecap="round" stroke-linejoin="round"/><path d="M5.6 1.4 L1.5 5.5 L5.6 9.6" fill="none" stroke="#ffe9c2" stroke-width=".7" stroke-linecap="round" stroke-linejoin="round"/><path d="M10.4 1.4 L14.5 5.5 L10.4 9.6" fill="none" stroke="#ffe9c2" stroke-width=".7" stroke-linecap="round" stroke-linejoin="round"/></svg>
<div class="a clip" style="left:11px;top:603px;width:83px;height:166px;">
<div class="a t" style="left:40px;top:2px;font-size:11px;line-height:13px;letter-spacing:0.3px;">version</div>
<div class="a t" style="left:40px;top:18px;font-size:11px;line-height:13px;letter-spacing:0.3px;">CalcModel</div>
<div class="a t" style="left:59.7px;top:34px;font-size:11px;line-height:13px;letter-spacing:0.25px;">RealBody</div>
<div class="a t" style="left:59.7px;top:50px;font-size:11px;line-height:13px;letter-spacing:0.25px;">Phase</div>
<div class="a t" style="left:59.7px;top:66px;font-size:11px;line-height:13px;letter-spacing:0.25px;">Phase</div>
<div class="a t" style="left:59.7px;top:82px;font-size:11px;line-height:13px;letter-spacing:0.25px;">Coordinate</div>
<div class="a t" style="left:59.7px;top:98px;font-size:11px;line-height:13px;letter-spacing:0.25px;">Coordinate</div>
<div class="a t" style="left:59.7px;top:114px;font-size:11px;line-height:13px;letter-spacing:0.25px;">Vector</div>
<div class="a t" style="left:59.7px;top:130px;font-size:11px;line-height:13px;letter-spacing:0.25px;">Vector</div>
<div class="a t" style="left:59.7px;top:146px;font-size:11px;line-height:13px;letter-spacing:0.25px;">Vector</div>
<div class="a t" style="left:59.7px;top:162px;font-size:11px;line-height:13px;letter-spacing:0.25px;">Vector</div>
</div>
<div class="a clip" style="left:52px;top:637px;width:16px;height:11px;">
<svg class="a" style="left:0px;top:0px;" width="16" height="11" viewBox="0 0 16 11" preserveAspectRatio="none"><path d="M5.6 1.4 L1.5 5.5 L5.6 9.6" fill="none" stroke="#a05c08" stroke-width="2.8" stroke-linecap="round" stroke-linejoin="round"/><path d="M10.4 1.4 L14.5 5.5 L10.4 9.6" fill="none" stroke="#a05c08" stroke-width="2.8" stroke-linecap="round" stroke-linejoin="round"/><path d="M5.6 1.4 L1.5 5.5 L5.6 9.6" fill="none" stroke="#f6ae4c" stroke-width="1.5" stroke-linecap="round" stroke-linejoin="round"/><path d="M10.4 1.4 L14.5 5.5 L10.4 9.6" fill="none" stroke="#f6ae4c" stroke-width="1.5" stroke-linecap="round" stroke-linejoin="round"/><path d="M5.6 1.4 L1.5 5.5 L5.6 9.6" fill="none" stroke="#ffe9c2" stroke-width=".7" stroke-linecap="round" stroke-linejoin="round"/><path d="M10.4 1.4 L14.5 5.5 L10.4 9.6" fill="none" stroke="#ffe9c2" stroke-width=".7" stroke-linecap="round" stroke-linejoin="round"/></svg>
</div>
<div class="a clip" style="left:52px;top:653px;width:16px;height:11px;">
<svg class="a" style="left:0px;top:0px;" width="16" height="11" viewBox="0 0 16 11" preserveAspectRatio="none"><path d="M5.6 1.4 L1.5 5.5 L5.6 9.6" fill="none" stroke="#a05c08" stroke-width="2.8" stroke-linecap="round" stroke-linejoin="round"/><path d="M10.4 1.4 L14.5 5.5 L10.4 9.6" fill="none" stroke="#a05c08" stroke-width="2.8" stroke-linecap="round" stroke-linejoin="round"/><path d="M5.6 1.4 L1.5 5.5 L5.6 9.6" fill="none" stroke="#f6ae4c" stroke-width="1.5" stroke-linecap="round" stroke-linejoin="round"/><path d="M10.4 1.4 L14.5 5.5 L10.4 9.6" fill="none" stroke="#f6ae4c" stroke-width="1.5" stroke-linecap="round" stroke-linejoin="round"/><path d="M5.6 1.4 L1.5 5.5 L5.6 9.6" fill="none" stroke="#ffe9c2" stroke-width=".7" stroke-linecap="round" stroke-linejoin="round"/><path d="M10.4 1.4 L14.5 5.5 L10.4 9.6" fill="none" stroke="#ffe9c2" stroke-width=".7" stroke-linecap="round" stroke-linejoin="round"/></svg>
</div>
<div class="a clip" style="left:52px;top:669px;width:16px;height:11px;">
<svg class="a" style="left:0px;top:0px;" width="16" height="11" viewBox="0 0 16 11" preserveAspectRatio="none"><path d="M5.6 1.4 L1.5 5.5 L5.6 9.6" fill="none" stroke="#a05c08" stroke-width="2.8" stroke-linecap="round" stroke-linejoin="round"/><path d="M10.4 1.4 L14.5 5.5 L10.4 9.6" fill="none" stroke="#a05c08" stroke-width="2.8" stroke-linecap="round" stroke-linejoin="round"/><path d="M5.6 1.4 L1.5 5.5 L5.6 9.6" fill="none" stroke="#f6ae4c" stroke-width="1.5" stroke-linecap="round" stroke-linejoin="round"/><path d="M10.4 1.4 L14.5 5.5 L10.4 9.6" fill="none" stroke="#f6ae4c" stroke-width="1.5" stroke-linecap="round" stroke-linejoin="round"/><path d="M5.6 1.4 L1.5 5.5 L5.6 9.6" fill="none" stroke="#ffe9c2" stroke-width=".7" stroke-linecap="round" stroke-linejoin="round"/><path d="M10.4 1.4 L14.5 5.5 L10.4 9.6" fill="none" stroke="#ffe9c2" stroke-width=".7" stroke-linecap="round" stroke-linejoin="round"/></svg>
</div>
<div class="a clip" style="left:52px;top:685px;width:16px;height:11px;">
<svg class="a" style="left:0px;top:0px;" width="16" height="11" viewBox="0 0 16 11" preserveAspectRatio="none"><path d="M5.6 1.4 L1.5 5.5 L5.6 9.6" fill="none" stroke="#a05c08" stroke-width="2.8" stroke-linecap="round" stroke-linejoin="round"/><path d="M10.4 1.4 L14.5 5.5 L10.4 9.6" fill="none" stroke="#a05c08" stroke-width="2.8" stroke-linecap="round" stroke-linejoin="round"/><path d="M5.6 1.4 L1.5 5.5 L5.6 9.6" fill="none" stroke="#f6ae4c" stroke-width="1.5" stroke-linecap="round" stroke-linejoin="round"/><path d="M10.4 1.4 L14.5 5.5 L10.4 9.6" fill="none" stroke="#f6ae4c" stroke-width="1.5" stroke-linecap="round" stroke-linejoin="round"/><path d="M5.6 1.4 L1.5 5.5 L5.6 9.6" fill="none" stroke="#ffe9c2" stroke-width=".7" stroke-linecap="round" stroke-linejoin="round"/><path d="M10.4 1.4 L14.5 5.5 L10.4 9.6" fill="none" stroke="#ffe9c2" stroke-width=".7" stroke-linecap="round" stroke-linejoin="round"/></svg>
</div>
<div class="a clip" style="left:52px;top:701px;width:16px;height:11px;">
<svg class="a" style="left:0px;top:0px;" width="16" height="11" viewBox="0 0 16 11" preserveAspectRatio="none"><path d="M5.6 1.4 L1.5 5.5 L5.6 9.6" fill="none" stroke="#a05c08" stroke-width="2.8" stroke-linecap="round" stroke-linejoin="round"/><path d="M10.4 1.4 L14.5 5.5 L10.4 9.6" fill="none" stroke="#a05c08" stroke-width="2.8" stroke-linecap="round" stroke-linejoin="round"/><path d="M5.6 1.4 L1.5 5.5 L5.6 9.6" fill="none" stroke="#f6ae4c" stroke-width="1.5" stroke-linecap="round" stroke-linejoin="round"/><path d="M10.4 1.4 L14.5 5.5 L10.4 9.6" fill="none" stroke="#f6ae4c" stroke-width="1.5" stroke-linecap="round" stroke-linejoin="round"/><path d="M5.6 1.4 L1.5 5.5 L5.6 9.6" fill="none" stroke="#ffe9c2" stroke-width=".7" stroke-linecap="round" stroke-linejoin="round"/><path d="M10.4 1.4 L14.5 5.5 L10.4 9.6" fill="none" stroke="#ffe9c2" stroke-width=".7" stroke-linecap="round" stroke-linejoin="round"/></svg>
</div>
<div class="a clip" style="left:52px;top:717px;width:16px;height:11px;">
<svg class="a" style="left:0px;top:0px;" width="16" height="11" viewBox="0 0 16 11" preserveAspectRatio="none"><path d="M5.6 1.4 L1.5 5.5 L5.6 9.6" fill="none" stroke="#a05c08" stroke-width="2.8" stroke-linecap="round" stroke-linejoin="round"/><path d="M10.4 1.4 L14.5 5.5 L10.4 9.6" fill="none" stroke="#a05c08" stroke-width="2.8" stroke-linecap="round" stroke-linejoin="round"/><path d="M5.6 1.4 L1.5 5.5 L5.6 9.6" fill="none" stroke="#f6ae4c" stroke-width="1.5" stroke-linecap="round" stroke-linejoin="round"/><path d="M10.4 1.4 L14.5 5.5 L10.4 9.6" fill="none" stroke="#f6ae4c" stroke-width="1.5" stroke-linecap="round" stroke-linejoin="round"/><path d="M5.6 1.4 L1.5 5.5 L5.6 9.6" fill="none" stroke="#ffe9c2" stroke-width=".7" stroke-linecap="round" stroke-linejoin="round"/><path d="M10.4 1.4 L14.5 5.5 L10.4 9.6" fill="none" stroke="#ffe9c2" stroke-width=".7" stroke-linecap="round" stroke-linejoin="round"/></svg>
</div>
<div class="a clip" style="left:52px;top:733px;width:16px;height:11px;">
<svg class="a" style="left:0px;top:0px;" width="16" height="11" viewBox="0 0 16 11" preserveAspectRatio="none"><path d="M5.6 1.4 L1.5 5.5 L5.6 9.6" fill="none" stroke="#a05c08" stroke-width="2.8" stroke-linecap="round" stroke-linejoin="round"/><path d="M10.4 1.4 L14.5 5.5 L10.4 9.6" fill="none" stroke="#a05c08" stroke-width="2.8" stroke-linecap="round" stroke-linejoin="round"/><path d="M5.6 1.4 L1.5 5.5 L5.6 9.6" fill="none" stroke="#f6ae4c" stroke-width="1.5" stroke-linecap="round" stroke-linejoin="round"/><path d="M10.4 1.4 L14.5 5.5 L10.4 9.6" fill="none" stroke="#f6ae4c" stroke-width="1.5" stroke-linecap="round" stroke-linejoin="round"/><path d="M5.6 1.4 L1.5 5.5 L5.6 9.6" fill="none" stroke="#ffe9c2" stroke-width=".7" stroke-linecap="round" stroke-linejoin="round"/><path d="M10.4 1.4 L14.5 5.5 L10.4 9.6" fill="none" stroke="#ffe9c2" stroke-width=".7" stroke-linecap="round" stroke-linejoin="round"/></svg>
</div>
<div class="a clip" style="left:52px;top:749px;width:16px;height:11px;">
<svg class="a" style="left:0px;top:0px;" width="16" height="11" viewBox="0 0 16 11" preserveAspectRatio="none"><path d="M5.6 1.4 L1.5 5.5 L5.6 9.6" fill="none" stroke="#a05c08" stroke-width="2.8" stroke-linecap="round" stroke-linejoin="round"/><path d="M10.4 1.4 L14.5 5.5 L10.4 9.6" fill="none" stroke="#a05c08" stroke-width="2.8" stroke-linecap="round" stroke-linejoin="round"/><path d="M5.6 1.4 L1.5 5.5 L5.6 9.6" fill="none" stroke="#f6ae4c" stroke-width="1.5" stroke-linecap="round" stroke-linejoin="round"/><path d="M10.4 1.4 L14.5 5.5 L10.4 9.6" fill="none" stroke="#f6ae4c" stroke-width="1.5" stroke-linecap="round" stroke-linejoin="round"/><path d="M5.6 1.4 L1.5 5.5 L5.6 9.6" fill="none" stroke="#ffe9c2" stroke-width=".7" stroke-linecap="round" stroke-linejoin="round"/><path d="M10.4 1.4 L14.5 5.5 L10.4 9.6" fill="none" stroke="#ffe9c2" stroke-width=".7" stroke-linecap="round" stroke-linejoin="round"/></svg>
</div>
<div class="a clip" style="left:52px;top:765px;width:16px;height:6px;">
<svg class="a" style="left:0px;top:0px;" width="16" height="11" viewBox="0 0 16 11" preserveAspectRatio="none"><path d="M5.6 1.4 L1.5 5.5 L5.6 9.6" fill="none" stroke="#a05c08" stroke-width="2.8" stroke-linecap="round" stroke-linejoin="round"/><path d="M10.4 1.4 L14.5 5.5 L10.4 9.6" fill="none" stroke="#a05c08" stroke-width="2.8" stroke-linecap="round" stroke-linejoin="round"/><path d="M5.6 1.4 L1.5 5.5 L5.6 9.6" fill="none" stroke="#f6ae4c" stroke-width="1.5" stroke-linecap="round" stroke-linejoin="round"/><path d="M10.4 1.4 L14.5 5.5 L10.4 9.6" fill="none" stroke="#f6ae4c" stroke-width="1.5" stroke-linecap="round" stroke-linejoin="round"/><path d="M5.6 1.4 L1.5 5.5 L5.6 9.6" fill="none" stroke="#ffe9c2" stroke-width=".7" stroke-linecap="round" stroke-linejoin="round"/><path d="M10.4 1.4 L14.5 5.5 L10.4 9.6" fill="none" stroke="#ffe9c2" stroke-width=".7" stroke-linecap="round" stroke-linejoin="round"/></svg>
</div>
<div class="a " style="left:94px;top:604px;width:16px;height:164px;background:#eeeeee;border-left:1px solid #7a8a99;border-right:1px solid #7a8a99;"></div>
<div class="a " style="left:95px;top:604px;width:1px;height:164px;background:#cbdaea;"></div>
<div class="a " style="left:110px;top:604px;width:1px;height:164px;background:#fff;"></div>
<div class="a " style="left:95px;top:604px;width:14px;height:14px;background:#eeeeee;border-left:1px solid #fff;border-top:1px solid #fff;"></div>
<svg class="a" style="left:99px;top:609px;" width="8" height="4" viewBox="0 0 8 4" preserveAspectRatio="none"><path d="M0 4 L4 0 L8 4Z" fill="#222"/></svg>
<div class="a " style="left:95px;top:752px;width:14px;height:16px;background:#eeeeee;border-top:1px solid #7a8a99;border-bottom:1px solid #7a8a99;"></div>
<div class="a " style="left:95px;top:753px;width:14px;height:1px;background:#fff;"></div>
<div class="a " style="left:95px;top:753px;width:1px;height:14px;background:#fff;"></div>
<svg class="a" style="left:99px;top:759px;" width="8" height="4" viewBox="0 0 8 4" preserveAspectRatio="none"><path d="M0 0 L4 4 L8 0Z" fill="#222"/></svg>
<div class="a " style="left:94px;top:618px;width:16px;height:35px;background:linear-gradient(90deg,#dde8f3,#ffffff 30%,#dde8f3 60%,#b8cfe5);border:1px solid #6382bf;"></div>
<div class="a " style="left:95px;top:619px;width:14px;height:1px;background:#f4f8fc;"></div>
<div class="a " style="left:98px;top:634px;width:9px;height:1px;background:#6382bf;"></div>
<div class="a " style="left:99px;top:635px;width:9px;height:1px;background:#fff;"></div>
<div class="a " style="left:98px;top:636px;width:9px;height:1px;background:#6382bf;"></div>
<div class="a " style="left:99px;top:637px;width:9px;height:1px;background:#fff;"></div>
<div class="a " style="left:98px;top:638px;width:9px;height:1px;background:#6382bf;"></div>
<div class="a " style="left:99px;top:639px;width:9px;height:1px;background:#fff;"></div>
<div class="a " style="left:11px;top:769px;width:82px;height:16px;background:#eeeeee;border-top:1px solid #7a8a99;border-bottom:1px solid #7a8a99;border-left:1px solid #7a8a99;"></div>
<div class="a " style="left:12px;top:770px;width:80px;height:1px;background:#fff;"></div>
<div class="a " style="left:12px;top:770px;width:1px;height:14px;background:#fff;"></div>
<svg class="a" style="left:17px;top:774px;" width="4" height="8" viewBox="0 0 4 8" preserveAspectRatio="none"><path d="M4 0 L0 4 L4 8Z" fill="#222"/></svg>
<div class="a " style="left:77px;top:770px;width:1px;height:14px;background:#7a8a99;"></div>
<div class="a " style="left:78px;top:770px;width:1px;height:14px;background:#fff;"></div>
<div class="a " style="left:92px;top:769px;width:1px;height:16px;background:#7a8a99;"></div>
<svg class="a" style="left:83px;top:774px;" width="4" height="8" viewBox="0 0 4 8" preserveAspectRatio="none"><path d="M0 0 L4 4 L0 8Z" fill="#222"/></svg>
<div class="a " style="left:26px;top:769px;width:17px;height:16px;background:linear-gradient(#c9daec,#ffffff 35%,#dde8f3 65%,#b8cfe5);border:1px solid #6382bf;"></div>
<div class="a " style="left:32px;top:773px;width:1px;height:9px;background:#6382bf;"></div>
<div class="a " style="left:34px;top:773px;width:1px;height:9px;background:#6382bf;"></div>
<div class="a " style="left:36px;top:773px;width:1px;height:9px;background:#6382bf;"></div>
<div class="a " style="left:11px;top:785px;width:100px;height:1px;background:#dfe9f3;"></div>
<div class="a " style="left:11px;top:786px;width:100px;height:1px;background:#b8cfe5;"></div>
<svg class="a" style="left:57px;top:788px" width="8" height="4"><path d="M0 0 H8 L4 4Z" fill="#b8cfe5"/></svg>
<div class="a " style="left:13px;top:795px;width:63px;height:24px;background:linear-gradient(#fbfbfb,#dedede);"></div>
<div class="a " style="left:15px;top:796px;width:27px;height:19px;background:#b8cfe5;border:1px solid #7a8a99;"></div>
<div class="a " style="left:16px;top:815px;width:27px;height:1px;background:#fff;"></div>
<div class="a " style="left:42px;top:797px;width:1px;height:19px;background:#fff;"></div>
<div class="a " style="left:46px;top:796px;width:27px;height:19px;background:#b8cfe5;border:1px solid #7a8a99;"></div>
<div class="a " style="left:47px;top:815px;width:27px;height:1px;background:#fff;"></div>
<div class="a " style="left:73px;top:797px;width:1px;height:19px;background:#fff;"></div>
<svg class="a" style="left:21px;top:797px" width="17" height="17"><defs><linearGradient id="agr" x1="0" y1="0" x2="0" y2="1"><stop offset="0" stop-color="#d8ecfb"/><stop offset="1" stop-color="#9fcbef"/></linearGradient></defs><circle cx="8.5" cy="8.6" r="7" fill="url(#agr)" stroke="#2e4d66" stroke-width="1.2"/><text x="8.5" y="12" text-anchor="middle" font-family="DejaVu Sans, Liberation Sans, sans-serif" font-size="10.5" font-weight="bold" fill="#ffffff" stroke="#3f6f9f" stroke-width=".9" paint-order="stroke">a</text></svg>
<svg class="a" style="left:50px;top:797px" width="20" height="18"><text x="10" y="14.6" text-anchor="middle" font-family="DejaVu Sans, Liberation Sans, sans-serif" font-size="16.5" font-style="italic" fill="#dcdcf2" stroke="#3c3488" stroke-width="1.6" paint-order="stroke">#</text></svg>
<div class="a clip" style="left:116px;top:100px;width:1065px;height:730px;">
<div class="a " style="left:0px;top:4px;width:1200px;height:630px;border:1px solid #b8cfe5;"></div>
<div class="a " style="left:1px;top:28px;width:1200px;height:588px;background:#fff;"></div>
<svg class="a" style="left:0;top:0" width="1065" height="40"><path d="M2.5 27.5 V16.5 L8.5 10.5 H133.5 V27.5" fill="#eeeeee" stroke="#7a8a99" stroke-width="1"/><path d="M3.5 17 L9 11.5 H133" fill="none" stroke="#fff" stroke-width="1"/><path d="M133.5 27.5 V16.5 L139.5 10.5 H240.5 V27.5" fill="#eeeeee" stroke="#7a8a99" stroke-width="1"/><path d="M134.5 17 L140 11.5 H240" fill="none" stroke="#fff" stroke-width="1"/><path d="M240.5 27.5 V16.5 L246.5 10.5 H405.5 V27.5" fill="#eeeeee" stroke="#7a8a99" stroke-width="1"/><path d="M241.5 17 L247 11.5 H405" fill="none" stroke="#fff" stroke-width="1"/><path d="M405.5 27.5 V16.5 L411.5 10.5 H546.5 V27.5" fill="#eeeeee" stroke="#7a8a99" stroke-width="1"/><path d="M406.5 17 L412 11.5 H546" fill="none" stroke="#fff" stroke-width="1"/><path d="M546.5 27.5 V16.5 L552.5 10.5 H648.5 V27.5" fill="#eeeeee" stroke="#7a8a99" stroke-width="1"/><path d="M547.5 17 L553 11.5 H648" fill="none" stroke="#fff" stroke-width="1"/><path d="M648.5 27.5 V16.5 L654.5 10.5 H935.5 V27.5" fill="#eeeeee" stroke="#7a8a99" stroke-width="1"/><path d="M649.5 17 L655 11.5 H935" fill="none" stroke="#fff" stroke-width="1"/><path d="M1 27.5 H935" stroke="#7a8a99" stroke-width="1"/><path d="M935.5 27.5 V14.5 L941.5 8.5 H1070" fill="none" stroke="#7a8a99" stroke-width="1"/><path d="M936 28 V14.7 L941.7 9 H1070 V28Z" fill="#fff"/></svg>
<svg class="a" style="left:11px;top:12px;" width="13" height="14" viewBox="0 0 13 14" preserveAspectRatio="none"><defs><linearGradient id="g18" x1="0" y1="0" x2="0" y2="1"><stop offset="0" stop-color="#bcd0e4"/><stop offset="1" stop-color="#eef4fa"/></linearGradient></defs><path d="M0.5 0 V13.5 H12.5 V3 L9.5 0Z" fill="url(#g18)"/><path d="M0.5 0 V13.5 H12.5" fill="none" stroke="#46607c" stroke-width="1"/><path d="M12.5 13.5 V3" fill="none" stroke="#a8bdd2" stroke-width="1"/><path d="M8.8 0 V3.2 H12.5" fill="#e6eef6" stroke="#7e9ab6" stroke-width=".8"/><path d="M5 1.5 L2.5 3.8 L5 6" fill="none" stroke="#222" stroke-width="1"/><path d="M6.5 1 V3.8" stroke="#222" stroke-width="1"/><path d="M6 5.5 H7 M8 5.5 H9" stroke="#222" stroke-width="1"/><path d="M3 10.5 H4 M5 10.5 H6" stroke="#222" stroke-width="1"/><path d="M7 7.5 L9.5 9.8 L7 12" fill="none" stroke="#222" stroke-width="1"/></svg>
<div class="a t" style="left:29.7px;top:12px;font-size:11px;line-height:13px;letter-spacing:0.08px;">cmlproject.xml</div>
<svg class="a" style="left:122.4px;top:16px" width="7" height="6"><path d="M0.9 0.9 L6.1 4.5 M6.1 0.9 L0.9 4.5" stroke="#111" stroke-width="1.5" fill="none"/></svg>
<svg class="a" style="left:144px;top:12px;" width="13" height="14" viewBox="0 0 13 14" preserveAspectRatio="none"><defs><linearGradient id="g19" x1="0" y1="0" x2="0" y2="1"><stop offset="0" stop-color="#bcd0e4"/><stop offset="1" stop-color="#eef4fa"/></linearGradient></defs><path d="M0.5 0 V13.5 H12.5 V3 L9.5 0Z" fill="url(#g19)"/><path d="M0.5 0 V13.5 H12.5" fill="none" stroke="#46607c" stroke-width="1"/><path d="M12.5 13.5 V3" fill="none" stroke="#a8bdd2" stroke-width="1"/><path d="M8.8 0 V3.2 H12.5" fill="#e6eef6" stroke="#7e9ab6" stroke-width=".8"/><path d="M5 1.5 L2.5 3.8 L5 6" fill="none" stroke="#222" stroke-width="1"/><path d="M6.5 1 V3.8" stroke="#222" stroke-width="1"/><path d="M6 5.5 H7 M8 5.5 H9" stroke="#222" stroke-width="1"/><path d="M3 10.5 H4 M5 10.5 H6" stroke="#222" stroke-width="1"/><path d="M7 7.5 L9.5 9.8 L7 12" fill="none" stroke="#222" stroke-width="1"/></svg>
<div class="a t" style="left:162.9px;top:12px;font-size:11px;line-height:13px;letter-spacing:0.15px;">Sheet.xml</div>
<svg class="a" style="left:229.4px;top:16px" width="7" height="6"><path d="M0.9 0.9 L6.1 4.5 M6.1 0.9 L0.9 4.5" stroke="#111" stroke-width="1.5" fill="none"/></svg>
<svg class="a" style="left:251px;top:12px;" width="13" height="14" viewBox="0 0 13 14" preserveAspectRatio="none"><defs><linearGradient id="g20" x1="0" y1="0" x2="0" y2="1"><stop offset="0" stop-color="#bcd0e4"/><stop offset="1" stop-color="#eef4fa"/></linearGradient></defs><path d="M0.5 0 V13.5 H12.5 V3 L9.5 0Z" fill="url(#g20)"/><path d="M0.5 0 V13.5 H12.5" fill="none" stroke="#46607c" stroke-width="1"/><path d="M12.5 13.5 V3" fill="none" stroke="#a8bdd2" stroke-width="1"/><path d="M8.8 0 V3.2 H12.5" fill="#e6eef6" stroke="#7e9ab6" stroke-width=".8"/><path d="M5 1.5 L2.5 3.8 L5 6" fill="none" stroke="#222" stroke-width="1"/><path d="M6.5 1 V3.8" stroke="#222" stroke-width="1"/><path d="M6 5.5 H7 M8 5.5 H9" stroke="#222" stroke-width="1"/><path d="M3 10.5 H4 M5 10.5 H6" stroke="#222" stroke-width="1"/><path d="M7 7.5 L9.5 9.8 L7 12" fill="none" stroke="#222" stroke-width="1"/></svg>
<div class="a t" style="left:269.9px;top:12px;font-size:11px;line-height:13px;letter-spacing:0px;">Output_dynamic.xml</div>
<svg class="a" style="left:394.4px;top:16px" width="7" height="6"><path d="M0.9 0.9 L6.1 4.5 M6.1 0.9 L0.9 4.5" stroke="#111" stroke-width="1.5" fill="none"/></svg>
<svg class="a" style="left:416px;top:12px;" width="13" height="14" viewBox="0 0 13 14" preserveAspectRatio="none"><defs><linearGradient id="g21" x1="0" y1="0" x2="0" y2="1"><stop offset="0" stop-color="#bcd0e4"/><stop offset="1" stop-color="#eef4fa"/></linearGradient></defs><path d="M0.5 0 V13.5 H12.5 V3 L9.5 0Z" fill="url(#g21)"/><path d="M0.5 0 V13.5 H12.5" fill="none" stroke="#46607c" stroke-width="1"/><path d="M12.5 13.5 V3" fill="none" stroke="#a8bdd2" stroke-width="1"/><path d="M8.8 0 V3.2 H12.5" fill="#e6eef6" stroke="#7e9ab6" stroke-width=".8"/><path d="M5 1.5 L2.5 3.8 L5 6" fill="none" stroke="#222" stroke-width="1"/><path d="M6.5 1 V3.8" stroke="#222" stroke-width="1"/><path d="M6 5.5 H7 M8 5.5 H9" stroke="#222" stroke-width="1"/><path d="M3 10.5 H4 M5 10.5 H6" stroke="#222" stroke-width="1"/><path d="M7 7.5 L9.5 9.8 L7 12" fill="none" stroke="#222" stroke-width="1"/></svg>
<div class="a t" style="left:434.2px;top:12px;font-size:11px;line-height:13px;letter-spacing:0.13px;">UEGeneral2.xml</div>
<svg class="a" style="left:535.4px;top:16px" width="7" height="6"><path d="M0.9 0.9 L6.1 4.5 M6.1 0.9 L0.9 4.5" stroke="#111" stroke-width="1.5" fill="none"/></svg>
<svg class="a" style="left:557px;top:12px;" width="13" height="14" viewBox="0 0 13 14" preserveAspectRatio="none"><defs><linearGradient id="g22" x1="0" y1="0" x2="0" y2="1"><stop offset="0" stop-color="#bcd0e4"/><stop offset="1" stop-color="#eef4fa"/></linearGradient></defs><path d="M0.5 0 V13.5 H12.5 V3 L9.5 0Z" fill="url(#g22)"/><path d="M0.5 0 V13.5 H12.5" fill="none" stroke="#46607c" stroke-width="1"/><path d="M12.5 13.5 V3" fill="none" stroke="#a8bdd2" stroke-width="1"/><path d="M8.8 0 V3.2 H12.5" fill="#e6eef6" stroke="#7e9ab6" stroke-width=".8"/><path d="M5 1.5 L2.5 3.8 L5 6" fill="none" stroke="#222" stroke-width="1"/><path d="M6.5 1 V3.8" stroke="#222" stroke-width="1"/><path d="M6 5.5 H7 M8 5.5 H9" stroke="#222" stroke-width="1"/><path d="M3 10.5 H4 M5 10.5 H6" stroke="#222" stroke-width="1"/><path d="M7 7.5 L9.5 9.8 L7 12" fill="none" stroke="#222" stroke-width="1"/></svg>
<div class="a t" style="left:575.1px;top:12px;font-size:11px;line-height:13px;letter-spacing:0px;">Input.xml</div>
<svg class="a" style="left:637.4px;top:16px" width="7" height="6"><path d="M0.9 0.9 L6.1 4.5 M6.1 0.9 L0.9 4.5" stroke="#111" stroke-width="1.5" fill="none"/></svg>
<div class="a t" style="left:662.2px;top:12px;font-size:11px;line-height:13px;letter-spacing:0.2px;">Probemessung 30.11[dynamic]_trinken.mat</div>
<svg class="a" style="left:924.4px;top:16px" width="7" height="6"><path d="M0.9 0.9 L6.1 4.5 M6.1 0.9 L0.9 4.5" stroke="#111" stroke-width="1.5" fill="none"/></svg>
<svg class="a" style="left:939px;top:15px" width="4" height="12"><g fill="#7a96c8"><rect x="2" y="0" width="1" height="1"/><rect x="0" y="2" width="1" height="1"/><rect x="2" y="4" width="1" height="1"/><rect x="0" y="6" width="1" height="1"/><rect x="2" y="8" width="1" height="1"/><rect x="0" y="10" width="1" height="1"/></g></svg>
<svg class="a" style="left:947px;top:10px;" width="13" height="16" viewBox="0 0 13 16" preserveAspectRatio="none"><defs><linearGradient id="g23" x1="0.2" y1="0" x2="0.5" y2="1"><stop offset="0" stop-color="#c6d7e8"/><stop offset=".55" stop-color="#dde8f2"/><stop offset="1" stop-color="#f6f9fc"/></linearGradient></defs><path d="M0.5 0.5 H8.5 L12.5 4.5 V14.5 H0.5Z" fill="url(#g23)" stroke="#5b6f84" stroke-width="1"/><path d="M8.5 0.5 V4.5 H12.5" fill="#f4f8fc" stroke="#8ea2b6" stroke-width=".9"/><path d="M1 15.3 H13" stroke="#9aa6b2" stroke-width=".8" opacity=".6"/></svg>
<div class="a t" style="left:966px;top:11px;font-size:11px;line-height:13px;letter-spacing:0.38px;">Probemessung 30.11[dynamic]_trinken.mat</div>
<div class="a " style="left:2px;top:33px;width:1100px;height:236px;background:#eeeeee;"></div>
<div class="a " style="left:2px;top:269px;width:1100px;height:1px;background:#7a8a99;"></div>
<div class="a " style="left:1px;top:270px;width:1100px;height:1px;background:#707070;"></div>
<div class="a " style="left:127px;top:32px;width:1px;height:237px;background:#7a8a99;"></div>
<div class="a " style="left:128px;top:33px;width:1px;height:236px;background:#fff;"></div>
<div class="a " style="left:152px;top:32px;width:1px;height:237px;background:#7a8a99;"></div>
<div class="a " style="left:153px;top:33px;width:1px;height:236px;background:#fff;"></div>
<div class="a " style="left:250px;top:32px;width:1px;height:237px;background:#7a8a99;"></div>
<div class="a " style="left:251px;top:33px;width:1px;height:236px;background:#fff;"></div>
<div class="a " style="left:356px;top:32px;width:1px;height:237px;background:#7a8a99;"></div>
<div class="a " style="left:357px;top:33px;width:1px;height:236px;background:#fff;"></div>
<div class="a " style="left:464px;top:32px;width:1px;height:237px;background:#7a8a99;"></div>
<div class="a " style="left:465px;top:33px;width:1px;height:236px;background:#fff;"></div>
<div class="a " style="left:587px;top:32px;width:1px;height:237px;background:#7a8a99;"></div>
<div class="a " style="left:588px;top:33px;width:1px;height:236px;background:#fff;"></div>
<div class="a " style="left:702px;top:32px;width:1px;height:237px;background:#7a8a99;"></div>
<div class="a " style="left:703px;top:33px;width:1px;height:236px;background:#fff;"></div>
<div class="a " style="left:810px;top:32px;width:1px;height:237px;background:#7a8a99;"></div>
<div class="a " style="left:811px;top:33px;width:1px;height:236px;background:#fff;"></div>
<div class="a " style="left:844px;top:32px;width:1px;height:237px;background:#7a8a99;"></div>
<div class="a " style="left:845px;top:33px;width:1px;height:236px;background:#fff;"></div>
<div class="a " style="left:949px;top:32px;width:1px;height:237px;background:#7a8a99;"></div>
<div class="a " style="left:950px;top:33px;width:1px;height:236px;background:#fff;"></div>
<div class="a " style="left:987px;top:32px;width:1px;height:237px;background:#7a8a99;"></div>
<div class="a " style="left:988px;top:33px;width:1px;height:236px;background:#fff;"></div>
<div class="a " style="left:1021px;top:32px;width:1px;height:237px;background:#7a8a99;"></div>
<div class="a " style="left:1022px;top:33px;width:1px;height:236px;background:#fff;"></div>
<div class="a t" style="left:135.00px;top:268.5px;line-height:13px;letter-spacing:0.083px;transform-origin:0 0;transform:rotate(-90deg);">LShoulderAnteRetroProjAngle</div>
<div class="a t" style="left:196.50px;top:268.5px;line-height:13px;letter-spacing:-0.026px;transform-origin:0 0;transform:rotate(-90deg);">RTrunkObliquityHDCalAngle</div>
<div class="a t" style="left:298.50px;top:268.5px;line-height:13px;letter-spacing:0.066px;transform-origin:0 0;transform:rotate(-90deg);">RShoulderAbdAddHDCalDirCosAngle</div>
<div class="a t" style="left:405.50px;top:268.5px;line-height:13px;letter-spacing:0.064px;transform-origin:0 0;transform:rotate(-90deg);">RShoulderAbdAddHDCalProjAngle</div>
<div class="a t" style="left:521.00px;top:268.5px;line-height:13px;letter-spacing:0.082px;transform-origin:0 0;transform:rotate(-90deg);">RShoulderAnteRetroHDCalDirCosAngle</div>
<div class="a t" style="left:640.00px;top:268.5px;line-height:13px;letter-spacing:0.123px;transform-origin:0 0;transform:rotate(-90deg);">RShoulderGirdleProRetracProjAngle</div>
<div class="a t" style="left:751.50px;top:268.5px;line-height:13px;letter-spacing:0.123px;transform-origin:0 0;transform:rotate(-90deg);">RShoulderGirdleEleDepAngle</div>
<div class="a t" style="left:822.50px;top:268.5px;line-height:13px;letter-spacing:0.165px;transform-origin:0 0;transform:rotate(-90deg);">LShoulderEleDepDirCosAngle</div>
<div class="a t" style="left:892.00px;top:268.5px;line-height:13px;letter-spacing:-0.010px;transform-origin:0 0;transform:rotate(-90deg);">LTrunkObliquityAngle</div>
<div class="a t" style="left:963.50px;top:268.5px;line-height:13px;letter-spacing:0.094px;transform-origin:0 0;transform:rotate(-90deg);">LShoulderAnteRetroHDCalDirCosAngle</div>
<div class="a t" style="left:999.50px;top:268.5px;line-height:13px;letter-spacing:0.075px;transform-origin:0 0;transform:rotate(-90deg);">LShoulderAnteRetroHDCalProjAngle</div>
<div class="a " style="left:1px;top:270px;width:1px;height:110px;background:#707070;"></div>
<div class="a " style="left:1px;top:379px;width:1100px;height:1px;background:#808080;"></div>
<div class="a " style="left:2px;top:291px;width:1100px;height:1px;background:#e6e6e6;"></div>
<div class="a " style="left:2px;top:313px;width:1100px;height:1px;background:#e6e6e6;"></div>
<div class="a " style="left:2px;top:335px;width:1100px;height:1px;background:#e6e6e6;"></div>
<div class="a " style="left:2px;top:357px;width:1100px;height:1px;background:#e6e6e6;"></div>
<div class="a " style="left:127px;top:271px;width:1px;height:108px;background:#e6e6e6;"></div>
<div class="a " style="left:152px;top:271px;width:1px;height:108px;background:#e6e6e6;"></div>
<div class="a " style="left:250px;top:271px;width:1px;height:108px;background:#e6e6e6;"></div>
<div class="a " style="left:356px;top:271px;width:1px;height:108px;background:#e6e6e6;"></div>
<div class="a " style="left:464px;top:271px;width:1px;height:108px;background:#e6e6e6;"></div>
<div class="a " style="left:587px;top:271px;width:1px;height:108px;background:#e6e6e6;"></div>
<div class="a " style="left:702px;top:271px;width:1px;height:108px;background:#e6e6e6;"></div>
<div class="a " style="left:810px;top:271px;width:1px;height:108px;background:#e6e6e6;"></div>
<div class="a " style="left:844px;top:271px;width:1px;height:108px;background:#e6e6e6;"></div>
<div class="a " style="left:949px;top:271px;width:1px;height:108px;background:#e6e6e6;"></div>
<div class="a " style="left:987px;top:271px;width:1px;height:108px;background:#e6e6e6;"></div>
<div class="a " style="left:1021px;top:271px;width:1px;height:108px;background:#e6e6e6;"></div>
<svg class="a" style="left:7px;top:276px;" width="6" height="10" viewBox="0 0 6 10" preserveAspectRatio="none"><circle cx="3" cy="3" r="2.2" fill="#fff" stroke="#5574c4" stroke-width="1.7"/><path d="M3 5.4 V10" stroke="#5574c4" stroke-width="1.9"/></svg>
<svg class="a" style="left:22px;top:272px;" width="13" height="16" viewBox="0 0 13 16" preserveAspectRatio="none"><defs><linearGradient id="g24" x1="0.2" y1="0" x2="0.5" y2="1"><stop offset="0" stop-color="#c6d7e8"/><stop offset=".55" stop-color="#dde8f2"/><stop offset="1" stop-color="#f6f9fc"/></linearGradient></defs><path d="M0.5 0.5 H8.5 L12.5 4.5 V14.5 H0.5Z" fill="url(#g24)" stroke="#5b6f84" stroke-width="1"/><path d="M8.5 0.5 V4.5 H12.5" fill="#f4f8fc" stroke="#8ea2b6" stroke-width=".9"/><path d="M1 15.3 H13" stroke="#9aa6b2" stroke-width=".8" opacity=".6"/></svg>
<div class="a t" style="left:40.3px;top:274px;font-size:11px;line-height:13px;">data</div>
<svg class="a" style="left:25px;top:298px;" width="6" height="10" viewBox="0 0 6 10" preserveAspectRatio="none"><circle cx="3" cy="3" r="2.2" fill="#fff" stroke="#5574c4" stroke-width="1.7"/><path d="M3 5.4 V10" stroke="#5574c4" stroke-width="1.9"/></svg>
<svg class="a" style="left:40px;top:294px;" width="13" height="16" viewBox="0 0 13 16" preserveAspectRatio="none"><defs><linearGradient id="g25" x1="0.2" y1="0" x2="0.5" y2="1"><stop offset="0" stop-color="#c6d7e8"/><stop offset=".55" stop-color="#dde8f2"/><stop offset="1" stop-color="#f6f9fc"/></linearGradient></defs><path d="M0.5 0.5 H8.5 L12.5 4.5 V14.5 H0.5Z" fill="url(#g25)" stroke="#5b6f84" stroke-width="1"/><path d="M8.5 0.5 V4.5 H12.5" fill="#f4f8fc" stroke="#8ea2b6" stroke-width=".9"/><path d="M1 15.3 H13" stroke="#9aa6b2" stroke-width=".8" opacity=".6"/></svg>
<div class="a t" style="left:58.3px;top:296px;font-size:11px;line-height:13px;">trinken.c3d</div>
<svg class="a" style="left:43px;top:320px;" width="6" height="10" viewBox="0 0 6 10" preserveAspectRatio="none"><circle cx="3" cy="3" r="2.2" fill="#fff" stroke="#5574c4" stroke-width="1.7"/><path d="M3 5.4 V10" stroke="#5574c4" stroke-width="1.9"/></svg>
<svg class="a" style="left:58px;top:316px;" width="13" height="16" viewBox="0 0 13 16" preserveAspectRatio="none"><defs><linearGradient id="g26" x1="0.2" y1="0" x2="0.5" y2="1"><stop offset="0" stop-color="#c6d7e8"/><stop offset=".55" stop-color="#dde8f2"/><stop offset="1" stop-color="#f6f9fc"/></linearGradient></defs><path d="M0.5 0.5 H8.5 L12.5 4.5 V14.5 H0.5Z" fill="url(#g26)" stroke="#5b6f84" stroke-width="1"/><path d="M8.5 0.5 V4.5 H12.5" fill="#f4f8fc" stroke="#8ea2b6" stroke-width=".9"/><path d="M1 15.3 H13" stroke="#9aa6b2" stroke-width=".8" opacity=".6"/></svg>
<div class="a t" style="left:76.3px;top:318px;font-size:11px;line-height:13px;letter-spacing:-0.25px;">RCycle</div>
<svg class="a" style="left:76px;top:338px;" width="13" height="16" viewBox="0 0 13 16" preserveAspectRatio="none"><defs><linearGradient id="g27" x1="0.2" y1="0" x2="0.5" y2="1"><stop offset="0" stop-color="#c6d7e8"/><stop offset=".55" stop-color="#dde8f2"/><stop offset="1" stop-color="#f6f9fc"/></linearGradient></defs><path d="M0.5 0.5 H8.5 L12.5 4.5 V14.5 H0.5Z" fill="url(#g27)" stroke="#5b6f84" stroke-width="1"/><path d="M8.5 0.5 V4.5 H12.5" fill="#f4f8fc" stroke="#8ea2b6" stroke-width=".9"/><path d="M1 15.3 H13" stroke="#9aa6b2" stroke-width=".8" opacity=".6"/></svg>
<div class="a t" style="left:94.3px;top:340px;font-size:11px;line-height:13px;">0</div>
<svg class="a" style="left:76px;top:360px;" width="13" height="16" viewBox="0 0 13 16" preserveAspectRatio="none"><defs><linearGradient id="g28" x1="0.2" y1="0" x2="0.5" y2="1"><stop offset="0" stop-color="#c6d7e8"/><stop offset=".55" stop-color="#dde8f2"/><stop offset="1" stop-color="#f6f9fc"/></linearGradient></defs><path d="M0.5 0.5 H8.5 L12.5 4.5 V14.5 H0.5Z" fill="url(#g28)" stroke="#5b6f84" stroke-width="1"/><path d="M8.5 0.5 V4.5 H12.5" fill="#f4f8fc" stroke="#8ea2b6" stroke-width=".9"/><path d="M1 15.3 H13" stroke="#9aa6b2" stroke-width=".8" opacity=".6"/></svg>
<div class="a t" style="left:94.3px;top:362px;font-size:11px;line-height:13px;">1</div>
<div class="a t" style="left:131.5px;top:318px;font-size:11px;line-height:13px;color:#999999;letter-spacing:0.1px;">-/-/-</div>
<div class="a t" style="left:156.5px;top:318px;font-size:11px;line-height:13px;color:#999999;letter-spacing:0.1px;">-0.16/4.8/3</div>
<div class="a t" style="left:254.5px;top:318px;font-size:11px;line-height:13px;color:#999999;letter-spacing:0.1px;">5.72/31.42/18.6</div>
<div class="a t" style="left:360.5px;top:318px;font-size:11px;line-height:13px;color:#999999;letter-spacing:0.1px;">7.5/113.72/42.02</div>
<div class="a t" style="left:468.5px;top:318px;font-size:11px;line-height:13px;color:#999999;letter-spacing:0.1px;">17.38/72.8/47.95</div>
<div class="a t" style="left:591.5px;top:318px;font-size:11px;line-height:13px;color:#999999;letter-spacing:0.1px;">10.03/26.55/17.33</div>
<div class="a t" style="left:706.5px;top:318px;font-size:11px;line-height:13px;color:#999999;letter-spacing:0.1px;">4.45/16.83/9.02</div>
<div class="a t" style="left:814.5px;top:318px;font-size:11px;line-height:13px;color:#999999;letter-spacing:0.1px;">-/-/-</div>
<div class="a t" style="left:848.5px;top:318px;font-size:11px;line-height:13px;color:#999999;letter-spacing:0.1px;">-3.87/0.26/-2.03</div>
<div class="a t" style="left:953.5px;top:318px;font-size:11px;line-height:13px;color:#999999;letter-spacing:0.1px;">-/-/-</div>
<div class="a t" style="left:991.5px;top:318px;font-size:11px;line-height:13px;color:#999999;letter-spacing:0.1px;">-/-/-</div>
<div class="a t" style="left:1025.5px;top:318px;font-size:11px;line-height:13px;color:#999999;letter-spacing:0.1px;">15.56/31.07/22.4</div>
<div class="a t" style="left:131.5px;top:340px;font-size:11px;line-height:13px;color:#000000;letter-spacing:0.1px;">-/-/-</div>
<div class="a t" style="left:156.5px;top:340px;font-size:11px;line-height:13px;color:#000000;letter-spacing:0.1px;">-0.37/4.64/2.89</div>
<div class="a t" style="left:254.5px;top:340px;font-size:11px;line-height:13px;color:#000000;letter-spacing:0.1px;">4.78/31.18/17.81</div>
<div class="a t" style="left:360.5px;top:340px;font-size:11px;line-height:13px;color:#000000;letter-spacing:0.1px;">6.19/110.9/38</div>
<div class="a t" style="left:468.5px;top:340px;font-size:11px;line-height:13px;color:#000000;letter-spacing:0.1px;">15.94/73.29/46.82</div>
<div class="a t" style="left:591.5px;top:340px;font-size:11px;line-height:13px;color:#000000;letter-spacing:0.1px;">10.31/29/18.38</div>
<div class="a t" style="left:706.5px;top:340px;font-size:11px;line-height:13px;color:#000000;letter-spacing:0.1px;">5.01/17.07/9.07</div>
<div class="a t" style="left:814.5px;top:340px;font-size:11px;line-height:13px;color:#000000;letter-spacing:0.1px;">-/-/-</div>
<div class="a t" style="left:848.5px;top:340px;font-size:11px;line-height:13px;color:#000000;letter-spacing:0.1px;">-3.77/0.31/-1.98</div>
<div class="a t" style="left:953.5px;top:340px;font-size:11px;line-height:13px;color:#000000;letter-spacing:0.1px;">-/-/-</div>
<div class="a t" style="left:991.5px;top:340px;font-size:11px;line-height:13px;color:#000000;letter-spacing:0.1px;">-/-/-</div>
<div class="a t" style="left:1025.5px;top:340px;font-size:11px;line-height:13px;color:#000000;letter-spacing:0.1px;">15.82/31.2/22.61</div>
<div class="a t" style="left:131.5px;top:362px;font-size:11px;line-height:13px;color:#000000;letter-spacing:0.1px;">-/-/-</div>
<div class="a t" style="left:156.5px;top:362px;font-size:11px;line-height:13px;color:#000000;letter-spacing:0.1px;">0.04/4.96/3.1</div>
<div class="a t" style="left:254.5px;top:362px;font-size:11px;line-height:13px;color:#000000;letter-spacing:0.1px;">6.66/31.66/19.4</div>
<div class="a t" style="left:360.5px;top:362px;font-size:11px;line-height:13px;color:#000000;letter-spacing:0.1px;">8.8/116.54/46.05</div>
<div class="a t" style="left:468.5px;top:362px;font-size:11px;line-height:13px;color:#000000;letter-spacing:0.1px;">18.82/72.31/49.09</div>
<div class="a t" style="left:591.5px;top:362px;font-size:11px;line-height:13px;color:#000000;letter-spacing:0.1px;">9.75/24.09/16.28</div>
<div class="a t" style="left:706.5px;top:362px;font-size:11px;line-height:13px;color:#000000;letter-spacing:0.1px;">3.9/16.59/8.97</div>
<div class="a t" style="left:814.5px;top:362px;font-size:11px;line-height:13px;color:#000000;letter-spacing:0.1px;">-/-/-</div>
<div class="a t" style="left:848.5px;top:362px;font-size:11px;line-height:13px;color:#000000;letter-spacing:0.1px;">-3.97/0.22/-2.08</div>
<div class="a t" style="left:953.5px;top:362px;font-size:11px;line-height:13px;color:#000000;letter-spacing:0.1px;">-/-/-</div>
<div class="a t" style="left:991.5px;top:362px;font-size:11px;line-height:13px;color:#000000;letter-spacing:0.1px;">-/-/-</div>
<div class="a t" style="left:1025.5px;top:362px;font-size:11px;line-height:13px;color:#000000;letter-spacing:0.1px;">15.31/29.8/21.9</div>
<div class="a " style="left:1px;top:616px;width:1200px;height:16px;background:#eeeeee;border-top:1px solid #7a8a99;border-bottom:1px solid #7a8a99;"></div>
<div class="a " style="left:1px;top:616px;width:1px;height:16px;background:#7a8a99;"></div>
<div class="a " style="left:2px;top:617px;width:14px;height:1px;background:#fff;"></div>
<div class="a " style="left:2px;top:617px;width:1px;height:14px;background:#fff;"></div>
<svg class="a" style="left:7px;top:621px;" width="4" height="8" viewBox="0 0 4 8" preserveAspectRatio="none"><path d="M4 0 L0 4 L4 8Z" fill="#222"/></svg>
<div class="a " style="left:1px;top:632px;width:15px;height:1px;background:#fff;"></div>
<div class="a " style="left:16px;top:632px;width:1100px;height:1px;background:#dbe6f1;"></div>
<div class="a " style="left:16px;top:616px;width:492px;height:16px;background:linear-gradient(#dde8f3,#ffffff 30%,#dde8f3 60%,#b8cfe5);border:1px solid #6382bf;"></div>
<div class="a " style="left:17px;top:617px;width:1px;height:14px;background:#eef3f9;"></div>
<div class="a " style="left:261px;top:620px;width:1px;height:9px;background:#6382bf;"></div>
<div class="a " style="left:263px;top:620px;width:1px;height:9px;background:#6382bf;"></div>
<div class="a " style="left:265px;top:620px;width:1px;height:9px;background:#6382bf;"></div>
</div>
<div class="a clip" style="left:116px;top:736px;width:1065px;height:90px;">
<div class="a " style="left:0px;top:2px;width:1200px;height:85px;border:1px solid #b8cfe5;"></div>
<div class="a " style="left:1px;top:3px;width:1200px;height:1px;background:#fff;"></div>
<div class="a " style="left:1px;top:3px;width:1px;height:17px;background:#fff;"></div>
<div class="a " style="left:66px;top:3px;width:1px;height:17px;background:#999;"></div>
<div class="a " style="left:66px;top:19px;width:1100px;height:1px;background:#999;"></div>
<div class="a " style="left:67px;top:20px;width:1100px;height:3px;background:#fff;"></div>
<div class="a " style="left:67px;top:4px;width:1px;height:15px;background:#fff;"></div>
<div class="a " style="left:1px;top:23px;width:1100px;height:1px;background:#999;"></div>
<div class="a t" style="left:6.5px;top:6.5px;font-size:11px;line-height:13px;">Output</div>
<svg class="a" style="left:54px;top:9px;" width="8" height="7" viewBox="0 0 8 7" preserveAspectRatio="none"><path d="M0.6 0.5 L7.4 6.5 M7.4 0.5 L0.6 6.5" stroke="#1a1a1a" stroke-width="1.35" fill="none"/></svg>
</div>
<div class="a " style="left:1188px;top:871px;width:3px;height:3px;background:linear-gradient(135deg,#eff0f1 40%,#9a9a9a);"></div>
<div class="a " style="left:873px;top:839px;width:1px;height:14px;background:#6382bf;"></div>
<div class="a " style="left:1000px;top:839px;width:1px;height:14px;background:#6382bf;"></div>
<div class="a t" style="left:929px;top:840px;font-size:11px;line-height:13px;">1:1</div>
<div class="a t" style="left:1005px;top:840px;font-size:11px;line-height:13px;">INS</div>
<svg class="a" style="left:1038px;top:838px;" width="16" height="16" viewBox="0 0 16 16" preserveAspectRatio="none"><rect x="0" y="0.5" width="16" height="15.5" fill="#cfe0fa" opacity=".7"/><rect x="1" y="2" width="14" height="12.6" fill="#fff"/><path d="M1 15 V3 Q1 1.5 2.5 1.5 H13.5 Q15 1.5 15 3" fill="none" stroke="#666" stroke-width="1"/><path d="M0.8 14.6 H15.2" stroke="#555" stroke-width="1.1"/><path d="M0.9 3 V14.6" stroke="#222" stroke-width="1.4"/><rect x="2" y="2.4" width="12" height="2.3" fill="#1c5c9c"/><rect x="3.3" y="1" width="1" height="2.6" fill="#b8d4f0"/><rect x="11.8" y="1" width="1" height="2.6" fill="#b8d4f0"/><rect x="0.6" y="8.4" width="1.4" height="2.3" fill="#000"/><rect x="3" y="8.4" width="2" height="2.3" fill="#000"/><rect x="6" y="8.5" width="5" height="2.1" fill="#000"/><path d="M10 6 L13.6 9.55 L10 13.1Z" fill="#000"/><rect x="14.1" y="5.2" width="1.3" height="9" fill="#000"/></svg>
<div class="a t" style="left:1058px;top:840px;font-size:11px;line-height:13px;">Remaining day(s)&nbsp; 0</div>
</div>
</body></html>
